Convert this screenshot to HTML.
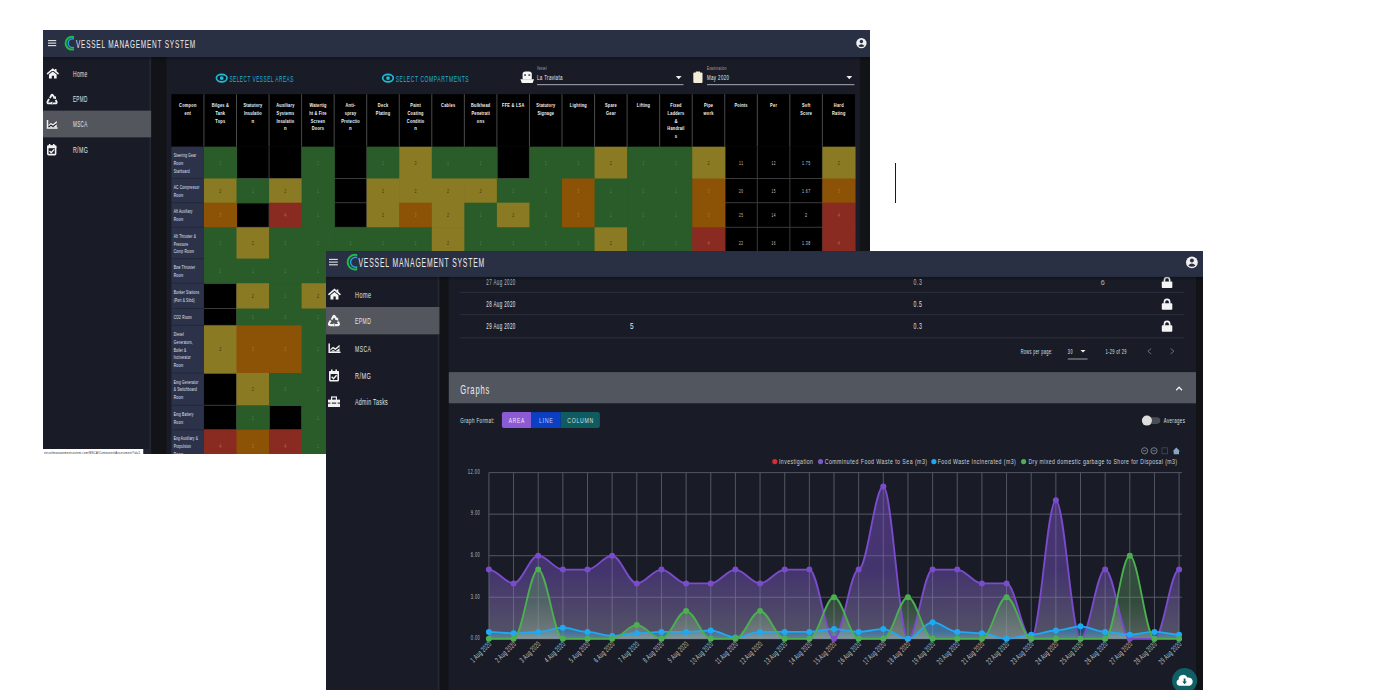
<!DOCTYPE html>
<html><head><meta charset="utf-8"><title>Vessel Management System</title>
<style>html,body{margin:0;padding:0;background:#fff;} svg{display:block;} text{font-family:"Liberation Sans",sans-serif;}</style>
</head><body>
<svg width="1380" height="690" viewBox="0 0 1380 690">
<defs><linearGradient id="hsh" x1="0" y1="0" x2="0" y2="1"><stop offset="0" stop-color="#000" stop-opacity="0.3"/><stop offset="1" stop-color="#000" stop-opacity="0"/></linearGradient></defs>
<rect x="0" y="0" width="1380" height="690" fill="#ffffff"/>
<clipPath id="c1"><rect x="43" y="30" width="827" height="424"/></clipPath>
<g clip-path="url(#c1)">
<rect x="43.00" y="30.00" width="827.00" height="424.00" fill="#191c26" />
<rect x="43.00" y="30.00" width="827.00" height="27.00" fill="#2a3043" />
<rect x="48.00" y="40.05" width="8.20" height="1.10" fill="#e6e6e6" />
<rect x="48.00" y="42.55" width="8.20" height="1.10" fill="#e6e6e6" />
<rect x="48.00" y="45.05" width="8.20" height="1.10" fill="#e6e6e6" />
<clipPath id="lg1"><rect x="62.599999999999994" y="33.800000000000004" width="11.400000000000006" height="18.8"/></clipPath>
<g clip-path="url(#lg1)">
<circle cx="72.0" cy="43.2" r="6.4" stroke="#1cbc48" stroke-width="2.0" fill="none"/>
<circle cx="72.6" cy="43.2" r="4.44" stroke="#1ea6e0" stroke-width="1.4" fill="none"/>
</g>
<text transform="translate(76.00,48.00) scale(0.5878,1)" font-size="11" fill="#ececec" textLength="202.80" lengthAdjust="spacing" >VESSEL MANAGEMENT SYSTEM</text>
<circle cx="861.4" cy="43.1" r="5.2" fill="#f0f0f0"/>
<circle cx="861.4" cy="41.54" r="1.7160000000000002" fill="#2a3043"/>
<path d="M858.1759999999999,45.96 Q861.4,42.32 864.624,45.96 Q861.4,48.04 858.1759999999999,45.96Z" fill="#2a3043"/>
<rect x="43.00" y="57.00" width="108.30" height="397.00" fill="#191c26" />
<rect x="43.00" y="110.80" width="108.30" height="26.40" fill="#53565d" />
<rect x="149.30" y="57.00" width="2.00" height="397.00" fill="#232733" />
<rect x="43.00" y="110.80" width="108.30" height="26.40" fill="#53565d" />
<rect x="151.30" y="57.00" width="15.10" height="397.00" fill="#121316" />
<rect x="860.20" y="57.00" width="9.80" height="397.00" fill="#121316" />
<rect x="43" y="57" width="827" height="4" fill="url(#hsh)"/>
<path d="M47.52,73.61 L52.80,69.24 L58.08,73.61" stroke="#f2f2f2" stroke-width="1.56" stroke-linecap="round" fill="none"/>
<rect x="54.96" y="69.03" width="1.56" height="3.12" fill="#f2f2f2" />
<path d="M52.80,71.53 L56.64,74.44 L56.64,78.60 L54.00,78.60 L54.00,75.69 L51.84,75.69 L51.84,78.60 L48.96,78.60 L48.96,74.44 Z" fill="#f2f2f2"/>
<path d="M49.90,98.17 L51.55,95.05 Q52.10,94.22 52.76,95.05 L54.52,97.96" stroke="#f2f2f2" stroke-width="1.87" fill="none"/>
<path d="M52.98,98.17 L56.06,99.21 L55.84,96.09Z" fill="#f2f2f2"/>
<path d="M49.02,99.00 L47.48,101.91 Q47.15,103.37 48.80,103.37 L51.00,103.37" stroke="#f2f2f2" stroke-width="1.87" fill="none"/>
<path d="M52.65,103.37 L55.40,103.37 Q57.05,103.37 56.50,101.60 L55.62,100.04" stroke="#f2f2f2" stroke-width="1.87" fill="none"/>
<path d="M52.32,101.29 L52.32,105.03 L49.90,103.16Z" fill="#f2f2f2"/>
<path d="M47.50,120.00 L47.50,128.00 L57.60,128.00" stroke="#f2f2f2" stroke-width="1.5" fill="none"/>
<path d="M48.53,127.30 L48.53,125.05 L50.90,123.05 L53.06,124.35 L56.74,121.04 L56.74,127.30 Z" fill="#f2f2f2"/>
<path d="M48.53,126.96 L50.90,125.22 L53.06,126.53 L56.74,123.65" stroke="#191c26" stroke-width="1.1" fill="none"/>
<rect x="47.80" y="146.16" width="7.80" height="8.42" stroke="#f2f2f2" stroke-width="1.6" fill="none" rx="0.8"/>
<rect x="47.00" y="145.62" width="9.40" height="2.59" fill="#f2f2f2" />
<rect x="48.88" y="144.00" width="1.50" height="3.02" fill="#f2f2f2" />
<rect x="53.02" y="144.00" width="1.50" height="3.02" fill="#f2f2f2" />
<path d="M49.54,150.91 L51.23,152.64 L54.14,149.40" stroke="#f2f2f2" stroke-width="1.4" fill="none"/>
<text transform="translate(72.90,76.70) scale(0.5953,1)" font-size="8.4" fill="#e2e4e8" textLength="24.36" lengthAdjust="spacing" >Home</text>
<text transform="translate(72.90,102.30) scale(0.5496,1)" font-size="8.4" fill="#e2e4e8" textLength="26.38" lengthAdjust="spacing" >EPMD</text>
<text transform="translate(72.90,127.30) scale(0.5496,1)" font-size="8.4" fill="#e2e4e8" textLength="26.38" lengthAdjust="spacing" >MSCA</text>
<text transform="translate(72.90,153.00) scale(0.6292,1)" font-size="8.4" fill="#e2e4e8" textLength="23.84" lengthAdjust="spacing" >R/MG</text>
<ellipse cx="221.7" cy="78.1" rx="5.3" ry="3.7" stroke="#1cbcd6" stroke-width="1.7" fill="none"/>
<circle cx="221.7" cy="78.1" r="1.9" fill="#1cbcd6"/>
<text transform="translate(229.40,81.70) scale(0.5264,1)" font-size="9" fill="#21b3d6" textLength="121.58" lengthAdjust="spacing" >SELECT VESSEL AREAS</text>
<ellipse cx="388.0" cy="78.1" rx="5.3" ry="3.7" stroke="#1cbcd6" stroke-width="1.7" fill="none"/>
<circle cx="388.0" cy="78.1" r="1.9" fill="#1cbcd6"/>
<text transform="translate(395.70,81.70) scale(0.5555,1)" font-size="9" fill="#21b3d6" textLength="131.42" lengthAdjust="spacing" >SELECT COMPARTMENTS</text>
<path d="M520.4,79.2 L534,79.2 L532.6,82.9 L521.8,82.9Z" fill="#f6f6f6"/>
<path d="M522.6,79.6 L522.6,74.2 Q522.6,71.4 525.4,71.4 L529,71.4 Q531.8,71.4 531.8,74.2 L531.8,79.6Z" fill="#f6f6f6"/>
<rect x="524.20" y="74.40" width="1.80" height="1.30" fill="#191c26" />
<rect x="528.40" y="74.40" width="1.80" height="1.30" fill="#191c26" />
<text transform="translate(537.00,70.00) scale(0.6162,1)" font-size="4.5" fill="#aab0bc" textLength="15.42" lengthAdjust="spacing" >Vessel</text>
<text transform="translate(537.00,80.00) scale(0.5683,1)" font-size="7.8" fill="#eef0f4" textLength="44.87" lengthAdjust="spacing" >La Traviata</text>
<rect x="537.00" y="84.00" width="146.50" height="1.20" fill="#8c9099" />
<path d="M675.8,76 L681.6,76 L678.7,79.2Z" fill="#eeeeee"/>
<rect x="693.30" y="72.50" width="9.20" height="10.50" fill="#f3ecd8" rx="1"/>
<rect x="695.80" y="71.50" width="4.20" height="2.20" fill="#f3ecd8" />
<text transform="translate(707.00,70.00) scale(0.6772,1)" font-size="4.5" fill="#aab0bc" textLength="28.80" lengthAdjust="spacing" >Examination</text>
<text transform="translate(707.00,80.30) scale(0.5385,1)" font-size="8" fill="#eef0f4" textLength="40.85" lengthAdjust="spacing" >May 2020</text>
<rect x="707.00" y="84.00" width="147.40" height="1.20" fill="#8c9099" />
<path d="M846.4,76 L852.2,76 L849.3,79.2Z" fill="#eeeeee"/>
<rect x="171.40" y="94.20" width="683.55" height="52.50" fill="#000000" />
<rect x="203.45" y="94.20" width="1.00" height="52.50" fill="#4a4a4a" />
<rect x="236.00" y="94.20" width="1.00" height="52.50" fill="#4a4a4a" />
<rect x="268.55" y="94.20" width="1.00" height="52.50" fill="#4a4a4a" />
<rect x="301.10" y="94.20" width="1.00" height="52.50" fill="#4a4a4a" />
<rect x="333.65" y="94.20" width="1.00" height="52.50" fill="#4a4a4a" />
<rect x="366.20" y="94.20" width="1.00" height="52.50" fill="#4a4a4a" />
<rect x="398.75" y="94.20" width="1.00" height="52.50" fill="#4a4a4a" />
<rect x="431.30" y="94.20" width="1.00" height="52.50" fill="#4a4a4a" />
<rect x="463.85" y="94.20" width="1.00" height="52.50" fill="#4a4a4a" />
<rect x="496.40" y="94.20" width="1.00" height="52.50" fill="#4a4a4a" />
<rect x="528.95" y="94.20" width="1.00" height="52.50" fill="#4a4a4a" />
<rect x="561.50" y="94.20" width="1.00" height="52.50" fill="#4a4a4a" />
<rect x="594.05" y="94.20" width="1.00" height="52.50" fill="#4a4a4a" />
<rect x="626.60" y="94.20" width="1.00" height="52.50" fill="#4a4a4a" />
<rect x="659.15" y="94.20" width="1.00" height="52.50" fill="#4a4a4a" />
<rect x="691.70" y="94.20" width="1.00" height="52.50" fill="#4a4a4a" />
<rect x="724.25" y="94.20" width="1.00" height="52.50" fill="#4a4a4a" />
<rect x="756.80" y="94.20" width="1.00" height="52.50" fill="#4a4a4a" />
<rect x="789.35" y="94.20" width="1.00" height="52.50" fill="#4a4a4a" />
<rect x="821.90" y="94.20" width="1.00" height="52.50" fill="#4a4a4a" />
<text transform="translate(187.68,107.40) scale(0.6348,1)" font-size="6.2" fill="#f6f6f6" text-anchor="middle" font-weight="bold" textLength="27.33" lengthAdjust="spacing" >Compon</text>
<text transform="translate(187.68,115.05) scale(0.6348,1)" font-size="6.2" fill="#f6f6f6" text-anchor="middle" font-weight="bold" textLength="10.11" lengthAdjust="spacing" >ent</text>
<text transform="translate(220.22,107.40) scale(0.6348,1)" font-size="6.2" fill="#f6f6f6" text-anchor="middle" font-weight="bold" textLength="26.96" lengthAdjust="spacing" >Bilges &amp;</text>
<text transform="translate(220.22,115.05) scale(0.6348,1)" font-size="6.2" fill="#f6f6f6" text-anchor="middle" font-weight="bold" textLength="15.23" lengthAdjust="spacing" >Tank</text>
<text transform="translate(220.22,122.70) scale(0.6348,1)" font-size="6.2" fill="#f6f6f6" text-anchor="middle" font-weight="bold" textLength="15.60" lengthAdjust="spacing" >Tops</text>
<text transform="translate(252.78,107.40) scale(0.6348,1)" font-size="6.2" fill="#f6f6f6" text-anchor="middle" font-weight="bold" textLength="29.58" lengthAdjust="spacing" >Statutory</text>
<text transform="translate(252.78,115.05) scale(0.6348,1)" font-size="6.2" fill="#f6f6f6" text-anchor="middle" font-weight="bold" textLength="27.71" lengthAdjust="spacing" >Insulatio</text>
<text x="252.78" y="122.70" font-size="6.2" fill="#f6f6f6" text-anchor="middle" font-weight="bold" textLength="2.61" lengthAdjust="spacingAndGlyphs" >n</text>
<text transform="translate(285.32,107.40) scale(0.6348,1)" font-size="6.2" fill="#f6f6f6" text-anchor="middle" font-weight="bold" textLength="28.47" lengthAdjust="spacing" >Auxiliary</text>
<text transform="translate(285.32,115.05) scale(0.6348,1)" font-size="6.2" fill="#f6f6f6" text-anchor="middle" font-weight="bold" textLength="27.72" lengthAdjust="spacing" >Systems</text>
<text transform="translate(285.32,122.70) scale(0.6348,1)" font-size="6.2" fill="#f6f6f6" text-anchor="middle" font-weight="bold" textLength="27.71" lengthAdjust="spacing" >Insulatio</text>
<text x="285.32" y="130.35" font-size="6.2" fill="#f6f6f6" text-anchor="middle" font-weight="bold" textLength="2.61" lengthAdjust="spacingAndGlyphs" >n</text>
<text transform="translate(317.88,107.40) scale(0.6348,1)" font-size="6.2" fill="#f6f6f6" text-anchor="middle" font-weight="bold" textLength="26.71" lengthAdjust="spacing" >Watertig</text>
<text transform="translate(317.88,115.05) scale(0.6348,1)" font-size="6.2" fill="#f6f6f6" text-anchor="middle" font-weight="bold" textLength="27.33" lengthAdjust="spacing" >ht &amp; Fire</text>
<text transform="translate(317.88,122.70) scale(0.6348,1)" font-size="6.2" fill="#f6f6f6" text-anchor="middle" font-weight="bold" textLength="22.48" lengthAdjust="spacing" >Screen</text>
<text transform="translate(317.88,130.35) scale(0.6348,1)" font-size="6.2" fill="#f6f6f6" text-anchor="middle" font-weight="bold" textLength="19.47" lengthAdjust="spacing" >Doors</text>
<text transform="translate(350.42,107.40) scale(0.6348,1)" font-size="6.2" fill="#f6f6f6" text-anchor="middle" font-weight="bold" textLength="15.34" lengthAdjust="spacing" >Anti-</text>
<text transform="translate(350.42,115.05) scale(0.6348,1)" font-size="6.2" fill="#f6f6f6" text-anchor="middle" font-weight="bold" textLength="17.98" lengthAdjust="spacing" >spray</text>
<text transform="translate(350.42,122.70) scale(0.6348,1)" font-size="6.2" fill="#f6f6f6" text-anchor="middle" font-weight="bold" textLength="29.21" lengthAdjust="spacing" >Protectio</text>
<text x="350.42" y="130.35" font-size="6.2" fill="#f6f6f6" text-anchor="middle" font-weight="bold" textLength="2.61" lengthAdjust="spacingAndGlyphs" >n</text>
<text transform="translate(382.97,107.40) scale(0.6348,1)" font-size="6.2" fill="#f6f6f6" text-anchor="middle" font-weight="bold" textLength="16.11" lengthAdjust="spacing" >Deck</text>
<text transform="translate(382.97,115.05) scale(0.6348,1)" font-size="6.2" fill="#f6f6f6" text-anchor="middle" font-weight="bold" textLength="22.47" lengthAdjust="spacing" >Plating</text>
<text transform="translate(415.52,107.40) scale(0.6348,1)" font-size="6.2" fill="#f6f6f6" text-anchor="middle" font-weight="bold" textLength="16.48" lengthAdjust="spacing" >Paint</text>
<text transform="translate(415.52,115.05) scale(0.6348,1)" font-size="6.2" fill="#f6f6f6" text-anchor="middle" font-weight="bold" textLength="25.08" lengthAdjust="spacing" >Coating</text>
<text transform="translate(415.52,122.70) scale(0.6348,1)" font-size="6.2" fill="#f6f6f6" text-anchor="middle" font-weight="bold" textLength="27.32" lengthAdjust="spacing" >Conditio</text>
<text x="415.52" y="130.35" font-size="6.2" fill="#f6f6f6" text-anchor="middle" font-weight="bold" textLength="2.61" lengthAdjust="spacingAndGlyphs" >n</text>
<text transform="translate(448.07,107.40) scale(0.6348,1)" font-size="6.2" fill="#f6f6f6" text-anchor="middle" font-weight="bold" textLength="22.10" lengthAdjust="spacing" >Cables</text>
<text transform="translate(480.62,107.40) scale(0.6348,1)" font-size="6.2" fill="#f6f6f6" text-anchor="middle" font-weight="bold" textLength="30.33" lengthAdjust="spacing" >Bulkhead</text>
<text transform="translate(480.62,115.05) scale(0.6348,1)" font-size="6.2" fill="#f6f6f6" text-anchor="middle" font-weight="bold" textLength="28.84" lengthAdjust="spacing" >Penetrati</text>
<text transform="translate(480.62,122.70) scale(0.6348,1)" font-size="6.2" fill="#f6f6f6" text-anchor="middle" font-weight="bold" textLength="11.98" lengthAdjust="spacing" >ons</text>
<text transform="translate(513.17,107.40) scale(0.6348,1)" font-size="6.2" fill="#f6f6f6" text-anchor="middle" font-weight="bold" textLength="34.82" lengthAdjust="spacing" >FFE &amp; LSA</text>
<text transform="translate(545.72,107.40) scale(0.6348,1)" font-size="6.2" fill="#f6f6f6" text-anchor="middle" font-weight="bold" textLength="29.58" lengthAdjust="spacing" >Statutory</text>
<text transform="translate(545.72,115.05) scale(0.6348,1)" font-size="6.2" fill="#f6f6f6" text-anchor="middle" font-weight="bold" textLength="26.21" lengthAdjust="spacing" >Signage</text>
<text transform="translate(578.27,107.40) scale(0.6348,1)" font-size="6.2" fill="#f6f6f6" text-anchor="middle" font-weight="bold" textLength="26.57" lengthAdjust="spacing" >Lighting</text>
<text transform="translate(610.82,107.40) scale(0.6348,1)" font-size="6.2" fill="#f6f6f6" text-anchor="middle" font-weight="bold" textLength="18.73" lengthAdjust="spacing" >Spare</text>
<text transform="translate(610.82,115.05) scale(0.6348,1)" font-size="6.2" fill="#f6f6f6" text-anchor="middle" font-weight="bold" textLength="15.36" lengthAdjust="spacing" >Gear</text>
<text transform="translate(643.37,107.40) scale(0.6348,1)" font-size="6.2" fill="#f6f6f6" text-anchor="middle" font-weight="bold" textLength="20.58" lengthAdjust="spacing" >Lifting</text>
<text transform="translate(675.92,107.40) scale(0.6348,1)" font-size="6.2" fill="#f6f6f6" text-anchor="middle" font-weight="bold" textLength="17.60" lengthAdjust="spacing" >Fixed</text>
<text transform="translate(675.92,115.05) scale(0.6348,1)" font-size="6.2" fill="#f6f6f6" text-anchor="middle" font-weight="bold" textLength="26.22" lengthAdjust="spacing" >Ladders</text>
<text x="675.92" y="122.70" font-size="6.2" fill="#f6f6f6" text-anchor="middle" font-weight="bold" textLength="3.09" lengthAdjust="spacingAndGlyphs" >&amp;</text>
<text transform="translate(675.92,130.35) scale(0.6348,1)" font-size="6.2" fill="#f6f6f6" text-anchor="middle" font-weight="bold" textLength="26.96" lengthAdjust="spacing" >Handrail</text>
<text x="675.92" y="138.00" font-size="6.2" fill="#f6f6f6" text-anchor="middle" font-weight="bold" textLength="2.38" lengthAdjust="spacingAndGlyphs" >s</text>
<text transform="translate(708.47,107.40) scale(0.6348,1)" font-size="6.2" fill="#f6f6f6" text-anchor="middle" font-weight="bold" textLength="14.23" lengthAdjust="spacing" >Pipe</text>
<text transform="translate(708.47,115.05) scale(0.6348,1)" font-size="6.2" fill="#f6f6f6" text-anchor="middle" font-weight="bold" textLength="15.73" lengthAdjust="spacing" >work</text>
<text transform="translate(741.02,107.40) scale(0.6348,1)" font-size="6.2" fill="#f6f6f6" text-anchor="middle" font-weight="bold" textLength="20.59" lengthAdjust="spacing" >Points</text>
<text transform="translate(773.57,107.40) scale(0.6348,1)" font-size="6.2" fill="#f6f6f6" text-anchor="middle" font-weight="bold" textLength="10.87" lengthAdjust="spacing" >Per</text>
<text transform="translate(806.12,107.40) scale(0.6348,1)" font-size="6.2" fill="#f6f6f6" text-anchor="middle" font-weight="bold" textLength="13.10" lengthAdjust="spacing" >Soft</text>
<text transform="translate(806.12,115.05) scale(0.6348,1)" font-size="6.2" fill="#f6f6f6" text-anchor="middle" font-weight="bold" textLength="18.73" lengthAdjust="spacing" >Score</text>
<text transform="translate(838.67,107.40) scale(0.6348,1)" font-size="6.2" fill="#f6f6f6" text-anchor="middle" font-weight="bold" textLength="15.35" lengthAdjust="spacing" >Hard</text>
<text transform="translate(838.67,115.05) scale(0.6348,1)" font-size="6.2" fill="#f6f6f6" text-anchor="middle" font-weight="bold" textLength="20.97" lengthAdjust="spacing" >Rating</text>
<rect x="203.95" y="146.70" width="651.00" height="315.30" fill="#000000" />
<rect x="236.00" y="146.70" width="1.00" height="315.30" fill="#3a3a3a" />
<rect x="268.55" y="146.70" width="1.00" height="315.30" fill="#3a3a3a" />
<rect x="301.10" y="146.70" width="1.00" height="315.30" fill="#3a3a3a" />
<rect x="333.65" y="146.70" width="1.00" height="315.30" fill="#3a3a3a" />
<rect x="366.20" y="146.70" width="1.00" height="315.30" fill="#3a3a3a" />
<rect x="398.75" y="146.70" width="1.00" height="315.30" fill="#3a3a3a" />
<rect x="431.30" y="146.70" width="1.00" height="315.30" fill="#3a3a3a" />
<rect x="463.85" y="146.70" width="1.00" height="315.30" fill="#3a3a3a" />
<rect x="496.40" y="146.70" width="1.00" height="315.30" fill="#3a3a3a" />
<rect x="528.95" y="146.70" width="1.00" height="315.30" fill="#3a3a3a" />
<rect x="561.50" y="146.70" width="1.00" height="315.30" fill="#3a3a3a" />
<rect x="594.05" y="146.70" width="1.00" height="315.30" fill="#3a3a3a" />
<rect x="626.60" y="146.70" width="1.00" height="315.30" fill="#3a3a3a" />
<rect x="659.15" y="146.70" width="1.00" height="315.30" fill="#3a3a3a" />
<rect x="691.70" y="146.70" width="1.00" height="315.30" fill="#3a3a3a" />
<rect x="724.25" y="146.70" width="1.00" height="315.30" fill="#3a3a3a" />
<rect x="756.80" y="146.70" width="1.00" height="315.30" fill="#3a3a3a" />
<rect x="789.35" y="146.70" width="1.00" height="315.30" fill="#3a3a3a" />
<rect x="821.90" y="146.70" width="1.00" height="315.30" fill="#3a3a3a" />
<rect x="203.95" y="178.00" width="651.00" height="1.00" fill="#3a3a3a" />
<rect x="203.95" y="202.20" width="651.00" height="1.00" fill="#3a3a3a" />
<rect x="203.95" y="226.80" width="651.00" height="1.00" fill="#3a3a3a" />
<rect x="203.95" y="258.10" width="651.00" height="1.00" fill="#3a3a3a" />
<rect x="203.95" y="282.70" width="651.00" height="1.00" fill="#3a3a3a" />
<rect x="203.95" y="308.00" width="651.00" height="1.00" fill="#3a3a3a" />
<rect x="203.95" y="324.90" width="651.00" height="1.00" fill="#3a3a3a" />
<rect x="203.95" y="372.50" width="651.00" height="1.00" fill="#3a3a3a" />
<rect x="203.95" y="404.80" width="651.00" height="1.00" fill="#3a3a3a" />
<rect x="203.95" y="429.20" width="651.00" height="1.00" fill="#3a3a3a" />
<rect x="171.40" y="146.70" width="32.55" height="315.30" fill="#2b3249" />
<rect x="171.40" y="178.00" width="32.55" height="1.00" fill="#232838" />
<rect x="171.40" y="202.20" width="32.55" height="1.00" fill="#232838" />
<rect x="171.40" y="226.80" width="32.55" height="1.00" fill="#232838" />
<rect x="171.40" y="258.10" width="32.55" height="1.00" fill="#232838" />
<rect x="171.40" y="282.70" width="32.55" height="1.00" fill="#232838" />
<rect x="171.40" y="308.00" width="32.55" height="1.00" fill="#232838" />
<rect x="171.40" y="324.90" width="32.55" height="1.00" fill="#232838" />
<rect x="171.40" y="372.50" width="32.55" height="1.00" fill="#232838" />
<rect x="171.40" y="404.80" width="32.55" height="1.00" fill="#232838" />
<rect x="171.40" y="429.20" width="32.55" height="1.00" fill="#232838" />
<rect x="203.95" y="146.70" width="33.15" height="32.40" fill="#2a5c2a" />
<rect x="301.60" y="146.70" width="33.15" height="32.40" fill="#2a5c2a" />
<rect x="366.70" y="146.70" width="33.15" height="32.40" fill="#2a5c2a" />
<rect x="399.25" y="146.70" width="33.15" height="32.40" fill="#8a7a24" />
<rect x="431.80" y="146.70" width="33.15" height="32.40" fill="#2a5c2a" />
<rect x="464.35" y="146.70" width="33.15" height="32.40" fill="#2a5c2a" />
<rect x="529.45" y="146.70" width="33.15" height="32.40" fill="#2a5c2a" />
<rect x="562.00" y="146.70" width="33.15" height="32.40" fill="#2a5c2a" />
<rect x="594.55" y="146.70" width="33.15" height="32.40" fill="#8a7a24" />
<rect x="627.10" y="146.70" width="33.15" height="32.40" fill="#2a5c2a" />
<rect x="659.65" y="146.70" width="33.15" height="32.40" fill="#2a5c2a" />
<rect x="692.20" y="146.70" width="33.15" height="32.40" fill="#8a7a24" />
<rect x="822.40" y="146.70" width="33.15" height="32.40" fill="#8a7a24" />
<text transform="translate(173.70,157.40) scale(0.5580,1)" font-size="5.8" fill="#e6ecf8" textLength="40.12" lengthAdjust="spacing" >Steering Gear</text>
<text transform="translate(173.70,165.10) scale(0.5580,1)" font-size="5.8" fill="#e6ecf8" textLength="17.19" lengthAdjust="spacing" >Room</text>
<text transform="translate(173.70,172.80) scale(0.5580,1)" font-size="5.8" fill="#e6ecf8" textLength="28.30" lengthAdjust="spacing" >Starboard</text>
<text x="220.22" y="164.60" font-size="5.2" fill="#4f7f4f" text-anchor="middle" textLength="2.00" lengthAdjust="spacingAndGlyphs" >1</text>
<text x="317.88" y="164.60" font-size="5.2" fill="#4f7f4f" text-anchor="middle" textLength="2.00" lengthAdjust="spacingAndGlyphs" >1</text>
<text x="382.97" y="164.60" font-size="5.2" fill="#4f7f4f" text-anchor="middle" textLength="2.00" lengthAdjust="spacingAndGlyphs" >1</text>
<text x="415.52" y="164.60" font-size="5.2" fill="#3a3418" text-anchor="middle" textLength="2.00" lengthAdjust="spacingAndGlyphs" >3</text>
<text x="448.07" y="164.60" font-size="5.2" fill="#4f7f4f" text-anchor="middle" textLength="2.00" lengthAdjust="spacingAndGlyphs" >1</text>
<text x="480.62" y="164.60" font-size="5.2" fill="#4f7f4f" text-anchor="middle" textLength="2.00" lengthAdjust="spacingAndGlyphs" >1</text>
<text x="545.72" y="164.60" font-size="5.2" fill="#4f7f4f" text-anchor="middle" textLength="2.00" lengthAdjust="spacingAndGlyphs" >1</text>
<text x="578.27" y="164.60" font-size="5.2" fill="#4f7f4f" text-anchor="middle" textLength="2.00" lengthAdjust="spacingAndGlyphs" >1</text>
<text x="610.82" y="164.60" font-size="5.2" fill="#3a3418" text-anchor="middle" textLength="2.00" lengthAdjust="spacingAndGlyphs" >2</text>
<text x="643.37" y="164.60" font-size="5.2" fill="#4f7f4f" text-anchor="middle" textLength="2.00" lengthAdjust="spacingAndGlyphs" >1</text>
<text x="675.92" y="164.60" font-size="5.2" fill="#4f7f4f" text-anchor="middle" textLength="2.00" lengthAdjust="spacingAndGlyphs" >1</text>
<text x="708.47" y="164.60" font-size="5.2" fill="#3a3418" text-anchor="middle" textLength="2.00" lengthAdjust="spacingAndGlyphs" >2</text>
<text transform="translate(741.02,164.60) scale(0.6372,1)" font-size="5.2" fill="#d0d0d0" text-anchor="middle" textLength="6.28" lengthAdjust="spacing" >11</text>
<text transform="translate(773.57,164.60) scale(0.5947,1)" font-size="5.2" fill="#d0d0d0" text-anchor="middle" textLength="6.73" lengthAdjust="spacing" >12</text>
<text transform="translate(806.12,164.60) scale(0.6798,1)" font-size="5.2" fill="#d0d0d0" text-anchor="middle" textLength="11.77" lengthAdjust="spacing" >1.75</text>
<text x="838.67" y="164.60" font-size="5.2" fill="#3a3418" text-anchor="middle" textLength="2.00" lengthAdjust="spacingAndGlyphs" >2</text>
<rect x="203.95" y="178.50" width="33.15" height="24.80" fill="#8a7a24" />
<rect x="236.50" y="178.50" width="33.15" height="24.80" fill="#2a5c2a" />
<rect x="269.05" y="178.50" width="33.15" height="24.80" fill="#8a7a24" />
<rect x="301.60" y="178.50" width="33.15" height="24.80" fill="#2a5c2a" />
<rect x="366.70" y="178.50" width="33.15" height="24.80" fill="#8a7a24" />
<rect x="399.25" y="178.50" width="33.15" height="24.80" fill="#8a7a24" />
<rect x="431.80" y="178.50" width="33.15" height="24.80" fill="#8a7a24" />
<rect x="464.35" y="178.50" width="33.15" height="24.80" fill="#8a7a24" />
<rect x="496.90" y="178.50" width="33.15" height="24.80" fill="#2a5c2a" />
<rect x="529.45" y="178.50" width="33.15" height="24.80" fill="#2a5c2a" />
<rect x="562.00" y="178.50" width="33.15" height="24.80" fill="#8c5205" />
<rect x="594.55" y="178.50" width="33.15" height="24.80" fill="#2a5c2a" />
<rect x="627.10" y="178.50" width="33.15" height="24.80" fill="#2a5c2a" />
<rect x="659.65" y="178.50" width="33.15" height="24.80" fill="#2a5c2a" />
<rect x="692.20" y="178.50" width="33.15" height="24.80" fill="#8c5205" />
<rect x="822.40" y="178.50" width="33.15" height="24.80" fill="#8c5205" />
<text transform="translate(173.70,189.20) scale(0.5580,1)" font-size="5.8" fill="#e6ecf8" textLength="45.84" lengthAdjust="spacing" >AC Compressor</text>
<text transform="translate(173.70,196.90) scale(0.5580,1)" font-size="5.8" fill="#e6ecf8" textLength="17.19" lengthAdjust="spacing" >Room</text>
<text x="220.22" y="192.60" font-size="5.2" fill="#3a3418" text-anchor="middle" textLength="2.00" lengthAdjust="spacingAndGlyphs" >2</text>
<text x="252.78" y="192.60" font-size="5.2" fill="#4f7f4f" text-anchor="middle" textLength="2.00" lengthAdjust="spacingAndGlyphs" >1</text>
<text x="285.32" y="192.60" font-size="5.2" fill="#3a3418" text-anchor="middle" textLength="2.00" lengthAdjust="spacingAndGlyphs" >2</text>
<text x="317.88" y="192.60" font-size="5.2" fill="#4f7f4f" text-anchor="middle" textLength="2.00" lengthAdjust="spacingAndGlyphs" >1</text>
<text x="382.97" y="192.60" font-size="5.2" fill="#3a3418" text-anchor="middle" textLength="2.00" lengthAdjust="spacingAndGlyphs" >2</text>
<text x="415.52" y="192.60" font-size="5.2" fill="#3a3418" text-anchor="middle" textLength="2.00" lengthAdjust="spacingAndGlyphs" >2</text>
<text x="448.07" y="192.60" font-size="5.2" fill="#3a3418" text-anchor="middle" textLength="2.00" lengthAdjust="spacingAndGlyphs" >2</text>
<text x="480.62" y="192.60" font-size="5.2" fill="#3a3418" text-anchor="middle" textLength="2.00" lengthAdjust="spacingAndGlyphs" >2</text>
<text x="513.17" y="192.60" font-size="5.2" fill="#4f7f4f" text-anchor="middle" textLength="2.00" lengthAdjust="spacingAndGlyphs" >1</text>
<text x="545.72" y="192.60" font-size="5.2" fill="#4f7f4f" text-anchor="middle" textLength="2.00" lengthAdjust="spacingAndGlyphs" >1</text>
<text x="578.27" y="192.60" font-size="5.2" fill="#b8762e" text-anchor="middle" textLength="2.00" lengthAdjust="spacingAndGlyphs" >3</text>
<text x="610.82" y="192.60" font-size="5.2" fill="#4f7f4f" text-anchor="middle" textLength="2.00" lengthAdjust="spacingAndGlyphs" >1</text>
<text x="643.37" y="192.60" font-size="5.2" fill="#4f7f4f" text-anchor="middle" textLength="2.00" lengthAdjust="spacingAndGlyphs" >1</text>
<text x="675.92" y="192.60" font-size="5.2" fill="#4f7f4f" text-anchor="middle" textLength="2.00" lengthAdjust="spacingAndGlyphs" >1</text>
<text x="708.47" y="192.60" font-size="5.2" fill="#b8762e" text-anchor="middle" textLength="2.00" lengthAdjust="spacingAndGlyphs" >3</text>
<text transform="translate(741.02,192.60) scale(0.5947,1)" font-size="5.2" fill="#d0d0d0" text-anchor="middle" textLength="6.73" lengthAdjust="spacing" >20</text>
<text transform="translate(773.57,192.60) scale(0.5947,1)" font-size="5.2" fill="#d0d0d0" text-anchor="middle" textLength="6.73" lengthAdjust="spacing" >15</text>
<text transform="translate(806.12,192.60) scale(0.6798,1)" font-size="5.2" fill="#d0d0d0" text-anchor="middle" textLength="11.77" lengthAdjust="spacing" >1.67</text>
<text x="838.67" y="192.60" font-size="5.2" fill="#b8762e" text-anchor="middle" textLength="2.00" lengthAdjust="spacingAndGlyphs" >3</text>
<rect x="203.95" y="202.70" width="33.15" height="25.20" fill="#8c5205" />
<rect x="269.05" y="202.70" width="33.15" height="25.20" fill="#8a2b22" />
<rect x="301.60" y="202.70" width="33.15" height="25.20" fill="#2a5c2a" />
<rect x="366.70" y="202.70" width="33.15" height="25.20" fill="#8a7a24" />
<rect x="399.25" y="202.70" width="33.15" height="25.20" fill="#8c5205" />
<rect x="431.80" y="202.70" width="33.15" height="25.20" fill="#8a7a24" />
<rect x="464.35" y="202.70" width="33.15" height="25.20" fill="#2a5c2a" />
<rect x="496.90" y="202.70" width="33.15" height="25.20" fill="#8a7a24" />
<rect x="529.45" y="202.70" width="33.15" height="25.20" fill="#2a5c2a" />
<rect x="562.00" y="202.70" width="33.15" height="25.20" fill="#8c5205" />
<rect x="594.55" y="202.70" width="33.15" height="25.20" fill="#2a5c2a" />
<rect x="627.10" y="202.70" width="33.15" height="25.20" fill="#2a5c2a" />
<rect x="659.65" y="202.70" width="33.15" height="25.20" fill="#2a5c2a" />
<rect x="692.20" y="202.70" width="33.15" height="25.20" fill="#8c5205" />
<rect x="822.40" y="202.70" width="33.15" height="25.20" fill="#8a2b22" />
<text transform="translate(173.70,213.40) scale(0.5580,1)" font-size="5.8" fill="#e6ecf8" textLength="33.67" lengthAdjust="spacing" >Aft Auxiliary</text>
<text transform="translate(173.70,221.10) scale(0.5580,1)" font-size="5.8" fill="#e6ecf8" textLength="17.19" lengthAdjust="spacing" >Room</text>
<text x="220.22" y="217.00" font-size="5.2" fill="#b8762e" text-anchor="middle" textLength="2.00" lengthAdjust="spacingAndGlyphs" >3</text>
<text x="285.32" y="217.00" font-size="5.2" fill="#c8645a" text-anchor="middle" textLength="2.00" lengthAdjust="spacingAndGlyphs" >4</text>
<text x="317.88" y="217.00" font-size="5.2" fill="#4f7f4f" text-anchor="middle" textLength="2.00" lengthAdjust="spacingAndGlyphs" >1</text>
<text x="382.97" y="217.00" font-size="5.2" fill="#3a3418" text-anchor="middle" textLength="2.00" lengthAdjust="spacingAndGlyphs" >2</text>
<text x="415.52" y="217.00" font-size="5.2" fill="#b8762e" text-anchor="middle" textLength="2.00" lengthAdjust="spacingAndGlyphs" >3</text>
<text x="448.07" y="217.00" font-size="5.2" fill="#3a3418" text-anchor="middle" textLength="2.00" lengthAdjust="spacingAndGlyphs" >2</text>
<text x="480.62" y="217.00" font-size="5.2" fill="#4f7f4f" text-anchor="middle" textLength="2.00" lengthAdjust="spacingAndGlyphs" >1</text>
<text x="513.17" y="217.00" font-size="5.2" fill="#3a3418" text-anchor="middle" textLength="2.00" lengthAdjust="spacingAndGlyphs" >2</text>
<text x="545.72" y="217.00" font-size="5.2" fill="#4f7f4f" text-anchor="middle" textLength="2.00" lengthAdjust="spacingAndGlyphs" >1</text>
<text x="578.27" y="217.00" font-size="5.2" fill="#b8762e" text-anchor="middle" textLength="2.00" lengthAdjust="spacingAndGlyphs" >3</text>
<text x="610.82" y="217.00" font-size="5.2" fill="#4f7f4f" text-anchor="middle" textLength="2.00" lengthAdjust="spacingAndGlyphs" >1</text>
<text x="643.37" y="217.00" font-size="5.2" fill="#4f7f4f" text-anchor="middle" textLength="2.00" lengthAdjust="spacingAndGlyphs" >1</text>
<text x="675.92" y="217.00" font-size="5.2" fill="#4f7f4f" text-anchor="middle" textLength="2.00" lengthAdjust="spacingAndGlyphs" >1</text>
<text x="708.47" y="217.00" font-size="5.2" fill="#b8762e" text-anchor="middle" textLength="2.00" lengthAdjust="spacingAndGlyphs" >3</text>
<text transform="translate(741.02,217.00) scale(0.5947,1)" font-size="5.2" fill="#d0d0d0" text-anchor="middle" textLength="6.73" lengthAdjust="spacing" >25</text>
<text transform="translate(773.57,217.00) scale(0.5947,1)" font-size="5.2" fill="#d0d0d0" text-anchor="middle" textLength="6.73" lengthAdjust="spacing" >14</text>
<text x="806.12" y="217.00" font-size="5.2" fill="#d0d0d0" text-anchor="middle" textLength="2.00" lengthAdjust="spacingAndGlyphs" >2</text>
<text x="838.67" y="217.00" font-size="5.2" fill="#c8645a" text-anchor="middle" textLength="2.00" lengthAdjust="spacingAndGlyphs" >4</text>
<rect x="203.95" y="227.30" width="33.15" height="31.90" fill="#2a5c2a" />
<rect x="236.50" y="227.30" width="33.15" height="31.90" fill="#8a7a24" />
<rect x="269.05" y="227.30" width="33.15" height="31.90" fill="#2a5c2a" />
<rect x="301.60" y="227.30" width="33.15" height="31.90" fill="#2a5c2a" />
<rect x="334.15" y="227.30" width="33.15" height="31.90" fill="#2a5c2a" />
<rect x="366.70" y="227.30" width="33.15" height="31.90" fill="#2a5c2a" />
<rect x="399.25" y="227.30" width="33.15" height="31.90" fill="#2a5c2a" />
<rect x="431.80" y="227.30" width="33.15" height="31.90" fill="#8a7a24" />
<rect x="464.35" y="227.30" width="33.15" height="31.90" fill="#2a5c2a" />
<rect x="496.90" y="227.30" width="33.15" height="31.90" fill="#2a5c2a" />
<rect x="529.45" y="227.30" width="33.15" height="31.90" fill="#2a5c2a" />
<rect x="562.00" y="227.30" width="33.15" height="31.90" fill="#2a5c2a" />
<rect x="594.55" y="227.30" width="33.15" height="31.90" fill="#8a7a24" />
<rect x="627.10" y="227.30" width="33.15" height="31.90" fill="#2a5c2a" />
<rect x="659.65" y="227.30" width="33.15" height="31.90" fill="#2a5c2a" />
<rect x="692.20" y="227.30" width="33.15" height="31.90" fill="#8a2b22" />
<rect x="822.40" y="227.30" width="33.15" height="31.90" fill="#8a2b22" />
<text transform="translate(173.70,238.00) scale(0.5580,1)" font-size="5.8" fill="#e6ecf8" textLength="39.64" lengthAdjust="spacing" >Aft Thruster &amp;</text>
<text transform="translate(173.70,245.70) scale(0.5580,1)" font-size="5.8" fill="#e6ecf8" textLength="25.79" lengthAdjust="spacing" >Pressure</text>
<text transform="translate(173.70,253.40) scale(0.5580,1)" font-size="5.8" fill="#e6ecf8" textLength="36.17" lengthAdjust="spacing" >Comp Room</text>
<text x="220.22" y="244.95" font-size="5.2" fill="#4f7f4f" text-anchor="middle" textLength="2.00" lengthAdjust="spacingAndGlyphs" >1</text>
<text x="252.78" y="244.95" font-size="5.2" fill="#3a3418" text-anchor="middle" textLength="2.00" lengthAdjust="spacingAndGlyphs" >2</text>
<text x="285.32" y="244.95" font-size="5.2" fill="#4f7f4f" text-anchor="middle" textLength="2.00" lengthAdjust="spacingAndGlyphs" >1</text>
<text x="317.88" y="244.95" font-size="5.2" fill="#4f7f4f" text-anchor="middle" textLength="2.00" lengthAdjust="spacingAndGlyphs" >1</text>
<text x="350.42" y="244.95" font-size="5.2" fill="#4f7f4f" text-anchor="middle" textLength="2.00" lengthAdjust="spacingAndGlyphs" >1</text>
<text x="382.97" y="244.95" font-size="5.2" fill="#4f7f4f" text-anchor="middle" textLength="2.00" lengthAdjust="spacingAndGlyphs" >1</text>
<text x="415.52" y="244.95" font-size="5.2" fill="#4f7f4f" text-anchor="middle" textLength="2.00" lengthAdjust="spacingAndGlyphs" >1</text>
<text x="448.07" y="244.95" font-size="5.2" fill="#3a3418" text-anchor="middle" textLength="2.00" lengthAdjust="spacingAndGlyphs" >2</text>
<text x="480.62" y="244.95" font-size="5.2" fill="#4f7f4f" text-anchor="middle" textLength="2.00" lengthAdjust="spacingAndGlyphs" >1</text>
<text x="513.17" y="244.95" font-size="5.2" fill="#4f7f4f" text-anchor="middle" textLength="2.00" lengthAdjust="spacingAndGlyphs" >1</text>
<text x="545.72" y="244.95" font-size="5.2" fill="#4f7f4f" text-anchor="middle" textLength="2.00" lengthAdjust="spacingAndGlyphs" >1</text>
<text x="578.27" y="244.95" font-size="5.2" fill="#4f7f4f" text-anchor="middle" textLength="2.00" lengthAdjust="spacingAndGlyphs" >1</text>
<text x="610.82" y="244.95" font-size="5.2" fill="#3a3418" text-anchor="middle" textLength="2.00" lengthAdjust="spacingAndGlyphs" >2</text>
<text x="643.37" y="244.95" font-size="5.2" fill="#4f7f4f" text-anchor="middle" textLength="2.00" lengthAdjust="spacingAndGlyphs" >1</text>
<text x="675.92" y="244.95" font-size="5.2" fill="#4f7f4f" text-anchor="middle" textLength="2.00" lengthAdjust="spacingAndGlyphs" >1</text>
<text x="708.47" y="244.95" font-size="5.2" fill="#c8645a" text-anchor="middle" textLength="2.00" lengthAdjust="spacingAndGlyphs" >4</text>
<text transform="translate(741.02,244.95) scale(0.5947,1)" font-size="5.2" fill="#d0d0d0" text-anchor="middle" textLength="6.73" lengthAdjust="spacing" >22</text>
<text transform="translate(773.57,244.95) scale(0.5947,1)" font-size="5.2" fill="#d0d0d0" text-anchor="middle" textLength="6.73" lengthAdjust="spacing" >16</text>
<text transform="translate(806.12,244.95) scale(0.6798,1)" font-size="5.2" fill="#d0d0d0" text-anchor="middle" textLength="11.77" lengthAdjust="spacing" >1.38</text>
<text x="838.67" y="244.95" font-size="5.2" fill="#c8645a" text-anchor="middle" textLength="2.00" lengthAdjust="spacingAndGlyphs" >4</text>
<rect x="203.95" y="258.60" width="33.15" height="25.20" fill="#2a5c2a" />
<rect x="236.50" y="258.60" width="33.15" height="25.20" fill="#2a5c2a" />
<rect x="269.05" y="258.60" width="33.15" height="25.20" fill="#2a5c2a" />
<rect x="301.60" y="258.60" width="33.15" height="25.20" fill="#2a5c2a" />
<rect x="334.15" y="258.60" width="33.15" height="25.20" fill="#2a5c2a" />
<rect x="366.70" y="258.60" width="33.15" height="25.20" fill="#2a5c2a" />
<rect x="399.25" y="258.60" width="33.15" height="25.20" fill="#2a5c2a" />
<rect x="431.80" y="258.60" width="33.15" height="25.20" fill="#2a5c2a" />
<rect x="464.35" y="258.60" width="33.15" height="25.20" fill="#2a5c2a" />
<rect x="496.90" y="258.60" width="33.15" height="25.20" fill="#2a5c2a" />
<rect x="529.45" y="258.60" width="33.15" height="25.20" fill="#2a5c2a" />
<rect x="562.00" y="258.60" width="33.15" height="25.20" fill="#2a5c2a" />
<rect x="594.55" y="258.60" width="33.15" height="25.20" fill="#2a5c2a" />
<rect x="627.10" y="258.60" width="33.15" height="25.20" fill="#2a5c2a" />
<rect x="659.65" y="258.60" width="33.15" height="25.20" fill="#2a5c2a" />
<rect x="692.20" y="258.60" width="33.15" height="25.20" fill="#2a5c2a" />
<rect x="822.40" y="258.60" width="33.15" height="25.20" fill="#2a5c2a" />
<text transform="translate(173.70,269.30) scale(0.5580,1)" font-size="5.8" fill="#e6ecf8" textLength="38.21" lengthAdjust="spacing" >Bow Thruster</text>
<text transform="translate(173.70,277.00) scale(0.5580,1)" font-size="5.8" fill="#e6ecf8" textLength="17.19" lengthAdjust="spacing" >Room</text>
<text x="220.22" y="272.90" font-size="5.2" fill="#4f7f4f" text-anchor="middle" textLength="2.00" lengthAdjust="spacingAndGlyphs" >1</text>
<text x="252.78" y="272.90" font-size="5.2" fill="#4f7f4f" text-anchor="middle" textLength="2.00" lengthAdjust="spacingAndGlyphs" >1</text>
<text x="285.32" y="272.90" font-size="5.2" fill="#4f7f4f" text-anchor="middle" textLength="2.00" lengthAdjust="spacingAndGlyphs" >1</text>
<text x="317.88" y="272.90" font-size="5.2" fill="#4f7f4f" text-anchor="middle" textLength="2.00" lengthAdjust="spacingAndGlyphs" >1</text>
<text x="350.42" y="272.90" font-size="5.2" fill="#4f7f4f" text-anchor="middle" textLength="2.00" lengthAdjust="spacingAndGlyphs" >1</text>
<text x="382.97" y="272.90" font-size="5.2" fill="#4f7f4f" text-anchor="middle" textLength="2.00" lengthAdjust="spacingAndGlyphs" >1</text>
<text x="415.52" y="272.90" font-size="5.2" fill="#4f7f4f" text-anchor="middle" textLength="2.00" lengthAdjust="spacingAndGlyphs" >1</text>
<text x="448.07" y="272.90" font-size="5.2" fill="#4f7f4f" text-anchor="middle" textLength="2.00" lengthAdjust="spacingAndGlyphs" >1</text>
<text x="480.62" y="272.90" font-size="5.2" fill="#4f7f4f" text-anchor="middle" textLength="2.00" lengthAdjust="spacingAndGlyphs" >1</text>
<text x="513.17" y="272.90" font-size="5.2" fill="#4f7f4f" text-anchor="middle" textLength="2.00" lengthAdjust="spacingAndGlyphs" >1</text>
<text x="545.72" y="272.90" font-size="5.2" fill="#4f7f4f" text-anchor="middle" textLength="2.00" lengthAdjust="spacingAndGlyphs" >1</text>
<text x="578.27" y="272.90" font-size="5.2" fill="#4f7f4f" text-anchor="middle" textLength="2.00" lengthAdjust="spacingAndGlyphs" >1</text>
<text x="610.82" y="272.90" font-size="5.2" fill="#4f7f4f" text-anchor="middle" textLength="2.00" lengthAdjust="spacingAndGlyphs" >1</text>
<text x="643.37" y="272.90" font-size="5.2" fill="#4f7f4f" text-anchor="middle" textLength="2.00" lengthAdjust="spacingAndGlyphs" >1</text>
<text x="675.92" y="272.90" font-size="5.2" fill="#4f7f4f" text-anchor="middle" textLength="2.00" lengthAdjust="spacingAndGlyphs" >1</text>
<text x="708.47" y="272.90" font-size="5.2" fill="#4f7f4f" text-anchor="middle" textLength="2.00" lengthAdjust="spacingAndGlyphs" >1</text>
<text x="838.67" y="272.90" font-size="5.2" fill="#4f7f4f" text-anchor="middle" textLength="2.00" lengthAdjust="spacingAndGlyphs" >1</text>
<rect x="236.50" y="283.20" width="33.15" height="25.90" fill="#8a7a24" />
<rect x="269.05" y="283.20" width="33.15" height="25.90" fill="#2a5c2a" />
<rect x="301.60" y="283.20" width="33.15" height="25.90" fill="#8a7a24" />
<rect x="334.15" y="283.20" width="33.15" height="25.90" fill="#2a5c2a" />
<rect x="366.70" y="283.20" width="33.15" height="25.90" fill="#2a5c2a" />
<rect x="399.25" y="283.20" width="33.15" height="25.90" fill="#2a5c2a" />
<rect x="431.80" y="283.20" width="33.15" height="25.90" fill="#2a5c2a" />
<rect x="464.35" y="283.20" width="33.15" height="25.90" fill="#2a5c2a" />
<rect x="496.90" y="283.20" width="33.15" height="25.90" fill="#2a5c2a" />
<rect x="529.45" y="283.20" width="33.15" height="25.90" fill="#2a5c2a" />
<rect x="562.00" y="283.20" width="33.15" height="25.90" fill="#2a5c2a" />
<rect x="594.55" y="283.20" width="33.15" height="25.90" fill="#2a5c2a" />
<rect x="627.10" y="283.20" width="33.15" height="25.90" fill="#2a5c2a" />
<rect x="659.65" y="283.20" width="33.15" height="25.90" fill="#2a5c2a" />
<rect x="692.20" y="283.20" width="33.15" height="25.90" fill="#2a5c2a" />
<rect x="822.40" y="283.20" width="33.15" height="25.90" fill="#2a5c2a" />
<text transform="translate(173.70,293.90) scale(0.5580,1)" font-size="5.8" fill="#e6ecf8" textLength="45.50" lengthAdjust="spacing" >Bunker Stations</text>
<text transform="translate(173.70,301.60) scale(0.5580,1)" font-size="5.8" fill="#e6ecf8" textLength="37.25" lengthAdjust="spacing" >(Port &amp; Stbd)</text>
<text x="252.78" y="297.85" font-size="5.2" fill="#3a3418" text-anchor="middle" textLength="2.00" lengthAdjust="spacingAndGlyphs" >2</text>
<text x="285.32" y="297.85" font-size="5.2" fill="#4f7f4f" text-anchor="middle" textLength="2.00" lengthAdjust="spacingAndGlyphs" >1</text>
<text x="317.88" y="297.85" font-size="5.2" fill="#3a3418" text-anchor="middle" textLength="2.00" lengthAdjust="spacingAndGlyphs" >2</text>
<text x="350.42" y="297.85" font-size="5.2" fill="#4f7f4f" text-anchor="middle" textLength="2.00" lengthAdjust="spacingAndGlyphs" >1</text>
<text x="382.97" y="297.85" font-size="5.2" fill="#4f7f4f" text-anchor="middle" textLength="2.00" lengthAdjust="spacingAndGlyphs" >1</text>
<text x="415.52" y="297.85" font-size="5.2" fill="#4f7f4f" text-anchor="middle" textLength="2.00" lengthAdjust="spacingAndGlyphs" >1</text>
<text x="448.07" y="297.85" font-size="5.2" fill="#4f7f4f" text-anchor="middle" textLength="2.00" lengthAdjust="spacingAndGlyphs" >1</text>
<text x="480.62" y="297.85" font-size="5.2" fill="#4f7f4f" text-anchor="middle" textLength="2.00" lengthAdjust="spacingAndGlyphs" >1</text>
<text x="513.17" y="297.85" font-size="5.2" fill="#4f7f4f" text-anchor="middle" textLength="2.00" lengthAdjust="spacingAndGlyphs" >1</text>
<text x="545.72" y="297.85" font-size="5.2" fill="#4f7f4f" text-anchor="middle" textLength="2.00" lengthAdjust="spacingAndGlyphs" >1</text>
<text x="578.27" y="297.85" font-size="5.2" fill="#4f7f4f" text-anchor="middle" textLength="2.00" lengthAdjust="spacingAndGlyphs" >1</text>
<text x="610.82" y="297.85" font-size="5.2" fill="#4f7f4f" text-anchor="middle" textLength="2.00" lengthAdjust="spacingAndGlyphs" >1</text>
<text x="643.37" y="297.85" font-size="5.2" fill="#4f7f4f" text-anchor="middle" textLength="2.00" lengthAdjust="spacingAndGlyphs" >1</text>
<text x="675.92" y="297.85" font-size="5.2" fill="#4f7f4f" text-anchor="middle" textLength="2.00" lengthAdjust="spacingAndGlyphs" >1</text>
<text x="708.47" y="297.85" font-size="5.2" fill="#4f7f4f" text-anchor="middle" textLength="2.00" lengthAdjust="spacingAndGlyphs" >1</text>
<text x="838.67" y="297.85" font-size="5.2" fill="#4f7f4f" text-anchor="middle" textLength="2.00" lengthAdjust="spacingAndGlyphs" >1</text>
<rect x="236.50" y="308.50" width="33.15" height="17.50" fill="#2a5c2a" />
<rect x="269.05" y="308.50" width="33.15" height="17.50" fill="#2a5c2a" />
<rect x="301.60" y="308.50" width="33.15" height="17.50" fill="#2a5c2a" />
<rect x="334.15" y="308.50" width="33.15" height="17.50" fill="#2a5c2a" />
<rect x="366.70" y="308.50" width="33.15" height="17.50" fill="#2a5c2a" />
<rect x="399.25" y="308.50" width="33.15" height="17.50" fill="#2a5c2a" />
<rect x="431.80" y="308.50" width="33.15" height="17.50" fill="#2a5c2a" />
<rect x="464.35" y="308.50" width="33.15" height="17.50" fill="#2a5c2a" />
<rect x="496.90" y="308.50" width="33.15" height="17.50" fill="#2a5c2a" />
<rect x="529.45" y="308.50" width="33.15" height="17.50" fill="#2a5c2a" />
<rect x="562.00" y="308.50" width="33.15" height="17.50" fill="#2a5c2a" />
<rect x="594.55" y="308.50" width="33.15" height="17.50" fill="#2a5c2a" />
<rect x="627.10" y="308.50" width="33.15" height="17.50" fill="#2a5c2a" />
<rect x="659.65" y="308.50" width="33.15" height="17.50" fill="#2a5c2a" />
<rect x="692.20" y="308.50" width="33.15" height="17.50" fill="#2a5c2a" />
<rect x="822.40" y="308.50" width="33.15" height="17.50" fill="#2a5c2a" />
<text transform="translate(173.70,319.20) scale(0.5580,1)" font-size="5.8" fill="#e6ecf8" textLength="32.23" lengthAdjust="spacing" >CO2 Room</text>
<text x="252.78" y="318.95" font-size="5.2" fill="#4f7f4f" text-anchor="middle" textLength="2.00" lengthAdjust="spacingAndGlyphs" >1</text>
<text x="285.32" y="318.95" font-size="5.2" fill="#4f7f4f" text-anchor="middle" textLength="2.00" lengthAdjust="spacingAndGlyphs" >1</text>
<text x="317.88" y="318.95" font-size="5.2" fill="#4f7f4f" text-anchor="middle" textLength="2.00" lengthAdjust="spacingAndGlyphs" >1</text>
<text x="350.42" y="318.95" font-size="5.2" fill="#4f7f4f" text-anchor="middle" textLength="2.00" lengthAdjust="spacingAndGlyphs" >1</text>
<text x="382.97" y="318.95" font-size="5.2" fill="#4f7f4f" text-anchor="middle" textLength="2.00" lengthAdjust="spacingAndGlyphs" >1</text>
<text x="415.52" y="318.95" font-size="5.2" fill="#4f7f4f" text-anchor="middle" textLength="2.00" lengthAdjust="spacingAndGlyphs" >1</text>
<text x="448.07" y="318.95" font-size="5.2" fill="#4f7f4f" text-anchor="middle" textLength="2.00" lengthAdjust="spacingAndGlyphs" >1</text>
<text x="480.62" y="318.95" font-size="5.2" fill="#4f7f4f" text-anchor="middle" textLength="2.00" lengthAdjust="spacingAndGlyphs" >1</text>
<text x="513.17" y="318.95" font-size="5.2" fill="#4f7f4f" text-anchor="middle" textLength="2.00" lengthAdjust="spacingAndGlyphs" >1</text>
<text x="545.72" y="318.95" font-size="5.2" fill="#4f7f4f" text-anchor="middle" textLength="2.00" lengthAdjust="spacingAndGlyphs" >1</text>
<text x="578.27" y="318.95" font-size="5.2" fill="#4f7f4f" text-anchor="middle" textLength="2.00" lengthAdjust="spacingAndGlyphs" >1</text>
<text x="610.82" y="318.95" font-size="5.2" fill="#4f7f4f" text-anchor="middle" textLength="2.00" lengthAdjust="spacingAndGlyphs" >1</text>
<text x="643.37" y="318.95" font-size="5.2" fill="#4f7f4f" text-anchor="middle" textLength="2.00" lengthAdjust="spacingAndGlyphs" >1</text>
<text x="675.92" y="318.95" font-size="5.2" fill="#4f7f4f" text-anchor="middle" textLength="2.00" lengthAdjust="spacingAndGlyphs" >1</text>
<text x="708.47" y="318.95" font-size="5.2" fill="#4f7f4f" text-anchor="middle" textLength="2.00" lengthAdjust="spacingAndGlyphs" >1</text>
<text x="838.67" y="318.95" font-size="5.2" fill="#4f7f4f" text-anchor="middle" textLength="2.00" lengthAdjust="spacingAndGlyphs" >1</text>
<rect x="203.95" y="325.40" width="33.15" height="48.20" fill="#8a7a24" />
<rect x="236.50" y="325.40" width="33.15" height="48.20" fill="#8c5205" />
<rect x="269.05" y="325.40" width="33.15" height="48.20" fill="#8c5205" />
<rect x="301.60" y="325.40" width="33.15" height="48.20" fill="#2a5c2a" />
<rect x="334.15" y="325.40" width="33.15" height="48.20" fill="#2a5c2a" />
<rect x="366.70" y="325.40" width="33.15" height="48.20" fill="#2a5c2a" />
<rect x="399.25" y="325.40" width="33.15" height="48.20" fill="#2a5c2a" />
<rect x="431.80" y="325.40" width="33.15" height="48.20" fill="#2a5c2a" />
<rect x="464.35" y="325.40" width="33.15" height="48.20" fill="#2a5c2a" />
<rect x="496.90" y="325.40" width="33.15" height="48.20" fill="#2a5c2a" />
<rect x="529.45" y="325.40" width="33.15" height="48.20" fill="#2a5c2a" />
<rect x="562.00" y="325.40" width="33.15" height="48.20" fill="#2a5c2a" />
<rect x="594.55" y="325.40" width="33.15" height="48.20" fill="#2a5c2a" />
<rect x="627.10" y="325.40" width="33.15" height="48.20" fill="#2a5c2a" />
<rect x="659.65" y="325.40" width="33.15" height="48.20" fill="#2a5c2a" />
<rect x="692.20" y="325.40" width="33.15" height="48.20" fill="#2a5c2a" />
<rect x="822.40" y="325.40" width="33.15" height="48.20" fill="#2a5c2a" />
<text transform="translate(173.70,336.10) scale(0.5580,1)" font-size="5.8" fill="#e6ecf8" textLength="17.91" lengthAdjust="spacing" >Diesel</text>
<text transform="translate(173.70,343.80) scale(0.5580,1)" font-size="5.8" fill="#e6ecf8" textLength="34.03" lengthAdjust="spacing" >Generators,</text>
<text transform="translate(173.70,351.50) scale(0.5580,1)" font-size="5.8" fill="#e6ecf8" textLength="22.57" lengthAdjust="spacing" >Boiler &amp;</text>
<text transform="translate(173.70,359.20) scale(0.5580,1)" font-size="5.8" fill="#e6ecf8" textLength="30.45" lengthAdjust="spacing" >Incinerator</text>
<text transform="translate(173.70,366.90) scale(0.5580,1)" font-size="5.8" fill="#e6ecf8" textLength="17.19" lengthAdjust="spacing" >Room</text>
<text x="220.22" y="351.20" font-size="5.2" fill="#3a3418" text-anchor="middle" textLength="2.00" lengthAdjust="spacingAndGlyphs" >2</text>
<text x="252.78" y="351.20" font-size="5.2" fill="#b8762e" text-anchor="middle" textLength="2.00" lengthAdjust="spacingAndGlyphs" >3</text>
<text x="285.32" y="351.20" font-size="5.2" fill="#b8762e" text-anchor="middle" textLength="2.00" lengthAdjust="spacingAndGlyphs" >3</text>
<text x="317.88" y="351.20" font-size="5.2" fill="#4f7f4f" text-anchor="middle" textLength="2.00" lengthAdjust="spacingAndGlyphs" >1</text>
<text x="350.42" y="351.20" font-size="5.2" fill="#4f7f4f" text-anchor="middle" textLength="2.00" lengthAdjust="spacingAndGlyphs" >1</text>
<text x="382.97" y="351.20" font-size="5.2" fill="#4f7f4f" text-anchor="middle" textLength="2.00" lengthAdjust="spacingAndGlyphs" >1</text>
<text x="415.52" y="351.20" font-size="5.2" fill="#4f7f4f" text-anchor="middle" textLength="2.00" lengthAdjust="spacingAndGlyphs" >1</text>
<text x="448.07" y="351.20" font-size="5.2" fill="#4f7f4f" text-anchor="middle" textLength="2.00" lengthAdjust="spacingAndGlyphs" >1</text>
<text x="480.62" y="351.20" font-size="5.2" fill="#4f7f4f" text-anchor="middle" textLength="2.00" lengthAdjust="spacingAndGlyphs" >1</text>
<text x="513.17" y="351.20" font-size="5.2" fill="#4f7f4f" text-anchor="middle" textLength="2.00" lengthAdjust="spacingAndGlyphs" >1</text>
<text x="545.72" y="351.20" font-size="5.2" fill="#4f7f4f" text-anchor="middle" textLength="2.00" lengthAdjust="spacingAndGlyphs" >1</text>
<text x="578.27" y="351.20" font-size="5.2" fill="#4f7f4f" text-anchor="middle" textLength="2.00" lengthAdjust="spacingAndGlyphs" >1</text>
<text x="610.82" y="351.20" font-size="5.2" fill="#4f7f4f" text-anchor="middle" textLength="2.00" lengthAdjust="spacingAndGlyphs" >1</text>
<text x="643.37" y="351.20" font-size="5.2" fill="#4f7f4f" text-anchor="middle" textLength="2.00" lengthAdjust="spacingAndGlyphs" >1</text>
<text x="675.92" y="351.20" font-size="5.2" fill="#4f7f4f" text-anchor="middle" textLength="2.00" lengthAdjust="spacingAndGlyphs" >1</text>
<text x="708.47" y="351.20" font-size="5.2" fill="#4f7f4f" text-anchor="middle" textLength="2.00" lengthAdjust="spacingAndGlyphs" >1</text>
<text x="838.67" y="351.20" font-size="5.2" fill="#4f7f4f" text-anchor="middle" textLength="2.00" lengthAdjust="spacingAndGlyphs" >1</text>
<rect x="236.50" y="373.00" width="33.15" height="32.90" fill="#8a7a24" />
<rect x="269.05" y="373.00" width="33.15" height="32.90" fill="#2a5c2a" />
<rect x="301.60" y="373.00" width="33.15" height="32.90" fill="#2a5c2a" />
<rect x="334.15" y="373.00" width="33.15" height="32.90" fill="#2a5c2a" />
<rect x="366.70" y="373.00" width="33.15" height="32.90" fill="#2a5c2a" />
<rect x="399.25" y="373.00" width="33.15" height="32.90" fill="#2a5c2a" />
<rect x="431.80" y="373.00" width="33.15" height="32.90" fill="#2a5c2a" />
<rect x="464.35" y="373.00" width="33.15" height="32.90" fill="#2a5c2a" />
<rect x="496.90" y="373.00" width="33.15" height="32.90" fill="#2a5c2a" />
<rect x="529.45" y="373.00" width="33.15" height="32.90" fill="#2a5c2a" />
<rect x="562.00" y="373.00" width="33.15" height="32.90" fill="#2a5c2a" />
<rect x="594.55" y="373.00" width="33.15" height="32.90" fill="#2a5c2a" />
<rect x="627.10" y="373.00" width="33.15" height="32.90" fill="#2a5c2a" />
<rect x="659.65" y="373.00" width="33.15" height="32.90" fill="#2a5c2a" />
<rect x="692.20" y="373.00" width="33.15" height="32.90" fill="#2a5c2a" />
<rect x="822.40" y="373.00" width="33.15" height="32.90" fill="#2a5c2a" />
<text transform="translate(173.70,383.70) scale(0.5580,1)" font-size="5.8" fill="#e6ecf8" textLength="44.06" lengthAdjust="spacing" >Emg Generator</text>
<text transform="translate(173.70,391.40) scale(0.5580,1)" font-size="5.8" fill="#e6ecf8" textLength="41.55" lengthAdjust="spacing" >&amp; Switchboard</text>
<text transform="translate(173.70,399.10) scale(0.5580,1)" font-size="5.8" fill="#e6ecf8" textLength="17.19" lengthAdjust="spacing" >Room</text>
<text x="252.78" y="391.15" font-size="5.2" fill="#3a3418" text-anchor="middle" textLength="2.00" lengthAdjust="spacingAndGlyphs" >2</text>
<text x="285.32" y="391.15" font-size="5.2" fill="#4f7f4f" text-anchor="middle" textLength="2.00" lengthAdjust="spacingAndGlyphs" >1</text>
<text x="317.88" y="391.15" font-size="5.2" fill="#4f7f4f" text-anchor="middle" textLength="2.00" lengthAdjust="spacingAndGlyphs" >1</text>
<text x="350.42" y="391.15" font-size="5.2" fill="#4f7f4f" text-anchor="middle" textLength="2.00" lengthAdjust="spacingAndGlyphs" >1</text>
<text x="382.97" y="391.15" font-size="5.2" fill="#4f7f4f" text-anchor="middle" textLength="2.00" lengthAdjust="spacingAndGlyphs" >1</text>
<text x="415.52" y="391.15" font-size="5.2" fill="#4f7f4f" text-anchor="middle" textLength="2.00" lengthAdjust="spacingAndGlyphs" >1</text>
<text x="448.07" y="391.15" font-size="5.2" fill="#4f7f4f" text-anchor="middle" textLength="2.00" lengthAdjust="spacingAndGlyphs" >1</text>
<text x="480.62" y="391.15" font-size="5.2" fill="#4f7f4f" text-anchor="middle" textLength="2.00" lengthAdjust="spacingAndGlyphs" >1</text>
<text x="513.17" y="391.15" font-size="5.2" fill="#4f7f4f" text-anchor="middle" textLength="2.00" lengthAdjust="spacingAndGlyphs" >1</text>
<text x="545.72" y="391.15" font-size="5.2" fill="#4f7f4f" text-anchor="middle" textLength="2.00" lengthAdjust="spacingAndGlyphs" >1</text>
<text x="578.27" y="391.15" font-size="5.2" fill="#4f7f4f" text-anchor="middle" textLength="2.00" lengthAdjust="spacingAndGlyphs" >1</text>
<text x="610.82" y="391.15" font-size="5.2" fill="#4f7f4f" text-anchor="middle" textLength="2.00" lengthAdjust="spacingAndGlyphs" >1</text>
<text x="643.37" y="391.15" font-size="5.2" fill="#4f7f4f" text-anchor="middle" textLength="2.00" lengthAdjust="spacingAndGlyphs" >1</text>
<text x="675.92" y="391.15" font-size="5.2" fill="#4f7f4f" text-anchor="middle" textLength="2.00" lengthAdjust="spacingAndGlyphs" >1</text>
<text x="708.47" y="391.15" font-size="5.2" fill="#4f7f4f" text-anchor="middle" textLength="2.00" lengthAdjust="spacingAndGlyphs" >1</text>
<text x="838.67" y="391.15" font-size="5.2" fill="#4f7f4f" text-anchor="middle" textLength="2.00" lengthAdjust="spacingAndGlyphs" >1</text>
<rect x="236.50" y="405.30" width="33.15" height="25.00" fill="#2a5c2a" />
<rect x="301.60" y="405.30" width="33.15" height="25.00" fill="#2a5c2a" />
<rect x="334.15" y="405.30" width="33.15" height="25.00" fill="#2a5c2a" />
<rect x="366.70" y="405.30" width="33.15" height="25.00" fill="#2a5c2a" />
<rect x="399.25" y="405.30" width="33.15" height="25.00" fill="#2a5c2a" />
<rect x="431.80" y="405.30" width="33.15" height="25.00" fill="#2a5c2a" />
<rect x="464.35" y="405.30" width="33.15" height="25.00" fill="#2a5c2a" />
<rect x="496.90" y="405.30" width="33.15" height="25.00" fill="#2a5c2a" />
<rect x="529.45" y="405.30" width="33.15" height="25.00" fill="#2a5c2a" />
<rect x="562.00" y="405.30" width="33.15" height="25.00" fill="#2a5c2a" />
<rect x="594.55" y="405.30" width="33.15" height="25.00" fill="#2a5c2a" />
<rect x="627.10" y="405.30" width="33.15" height="25.00" fill="#2a5c2a" />
<rect x="659.65" y="405.30" width="33.15" height="25.00" fill="#2a5c2a" />
<rect x="692.20" y="405.30" width="33.15" height="25.00" fill="#2a5c2a" />
<rect x="822.40" y="405.30" width="33.15" height="25.00" fill="#2a5c2a" />
<text transform="translate(173.70,416.00) scale(0.5580,1)" font-size="5.8" fill="#e6ecf8" textLength="35.46" lengthAdjust="spacing" >Emg Battery</text>
<text transform="translate(173.70,423.70) scale(0.5580,1)" font-size="5.8" fill="#e6ecf8" textLength="17.19" lengthAdjust="spacing" >Room</text>
<text x="252.78" y="419.50" font-size="5.2" fill="#4f7f4f" text-anchor="middle" textLength="2.00" lengthAdjust="spacingAndGlyphs" >1</text>
<text x="317.88" y="419.50" font-size="5.2" fill="#4f7f4f" text-anchor="middle" textLength="2.00" lengthAdjust="spacingAndGlyphs" >1</text>
<text x="350.42" y="419.50" font-size="5.2" fill="#4f7f4f" text-anchor="middle" textLength="2.00" lengthAdjust="spacingAndGlyphs" >1</text>
<text x="382.97" y="419.50" font-size="5.2" fill="#4f7f4f" text-anchor="middle" textLength="2.00" lengthAdjust="spacingAndGlyphs" >1</text>
<text x="415.52" y="419.50" font-size="5.2" fill="#4f7f4f" text-anchor="middle" textLength="2.00" lengthAdjust="spacingAndGlyphs" >1</text>
<text x="448.07" y="419.50" font-size="5.2" fill="#4f7f4f" text-anchor="middle" textLength="2.00" lengthAdjust="spacingAndGlyphs" >1</text>
<text x="480.62" y="419.50" font-size="5.2" fill="#4f7f4f" text-anchor="middle" textLength="2.00" lengthAdjust="spacingAndGlyphs" >1</text>
<text x="513.17" y="419.50" font-size="5.2" fill="#4f7f4f" text-anchor="middle" textLength="2.00" lengthAdjust="spacingAndGlyphs" >1</text>
<text x="545.72" y="419.50" font-size="5.2" fill="#4f7f4f" text-anchor="middle" textLength="2.00" lengthAdjust="spacingAndGlyphs" >1</text>
<text x="578.27" y="419.50" font-size="5.2" fill="#4f7f4f" text-anchor="middle" textLength="2.00" lengthAdjust="spacingAndGlyphs" >1</text>
<text x="610.82" y="419.50" font-size="5.2" fill="#4f7f4f" text-anchor="middle" textLength="2.00" lengthAdjust="spacingAndGlyphs" >1</text>
<text x="643.37" y="419.50" font-size="5.2" fill="#4f7f4f" text-anchor="middle" textLength="2.00" lengthAdjust="spacingAndGlyphs" >1</text>
<text x="675.92" y="419.50" font-size="5.2" fill="#4f7f4f" text-anchor="middle" textLength="2.00" lengthAdjust="spacingAndGlyphs" >1</text>
<text x="708.47" y="419.50" font-size="5.2" fill="#4f7f4f" text-anchor="middle" textLength="2.00" lengthAdjust="spacingAndGlyphs" >1</text>
<text x="838.67" y="419.50" font-size="5.2" fill="#4f7f4f" text-anchor="middle" textLength="2.00" lengthAdjust="spacingAndGlyphs" >1</text>
<rect x="203.95" y="429.70" width="33.15" height="32.90" fill="#8a2b22" />
<rect x="236.50" y="429.70" width="33.15" height="32.90" fill="#8c5205" />
<rect x="269.05" y="429.70" width="33.15" height="32.90" fill="#8a2b22" />
<rect x="301.60" y="429.70" width="33.15" height="32.90" fill="#2a5c2a" />
<rect x="334.15" y="429.70" width="33.15" height="32.90" fill="#2a5c2a" />
<rect x="366.70" y="429.70" width="33.15" height="32.90" fill="#2a5c2a" />
<rect x="399.25" y="429.70" width="33.15" height="32.90" fill="#2a5c2a" />
<rect x="431.80" y="429.70" width="33.15" height="32.90" fill="#2a5c2a" />
<rect x="464.35" y="429.70" width="33.15" height="32.90" fill="#2a5c2a" />
<rect x="496.90" y="429.70" width="33.15" height="32.90" fill="#2a5c2a" />
<rect x="529.45" y="429.70" width="33.15" height="32.90" fill="#2a5c2a" />
<rect x="562.00" y="429.70" width="33.15" height="32.90" fill="#2a5c2a" />
<rect x="594.55" y="429.70" width="33.15" height="32.90" fill="#2a5c2a" />
<rect x="627.10" y="429.70" width="33.15" height="32.90" fill="#2a5c2a" />
<rect x="659.65" y="429.70" width="33.15" height="32.90" fill="#2a5c2a" />
<rect x="692.20" y="429.70" width="33.15" height="32.90" fill="#2a5c2a" />
<rect x="822.40" y="429.70" width="33.15" height="32.90" fill="#2a5c2a" />
<text transform="translate(173.70,440.40) scale(0.5580,1)" font-size="5.8" fill="#e6ecf8" textLength="43.34" lengthAdjust="spacing" >Eng Auxiliary &amp;</text>
<text transform="translate(173.70,448.10) scale(0.5580,1)" font-size="5.8" fill="#e6ecf8" textLength="30.45" lengthAdjust="spacing" >Propulsion</text>
<text transform="translate(173.70,455.80) scale(0.5580,1)" font-size="5.8" fill="#e6ecf8" textLength="17.19" lengthAdjust="spacing" >Room</text>
<text x="220.22" y="447.85" font-size="5.2" fill="#c8645a" text-anchor="middle" textLength="2.00" lengthAdjust="spacingAndGlyphs" >4</text>
<text x="252.78" y="447.85" font-size="5.2" fill="#b8762e" text-anchor="middle" textLength="2.00" lengthAdjust="spacingAndGlyphs" >3</text>
<text x="285.32" y="447.85" font-size="5.2" fill="#c8645a" text-anchor="middle" textLength="2.00" lengthAdjust="spacingAndGlyphs" >4</text>
<text x="317.88" y="447.85" font-size="5.2" fill="#4f7f4f" text-anchor="middle" textLength="2.00" lengthAdjust="spacingAndGlyphs" >1</text>
<text x="350.42" y="447.85" font-size="5.2" fill="#4f7f4f" text-anchor="middle" textLength="2.00" lengthAdjust="spacingAndGlyphs" >1</text>
<text x="382.97" y="447.85" font-size="5.2" fill="#4f7f4f" text-anchor="middle" textLength="2.00" lengthAdjust="spacingAndGlyphs" >1</text>
<text x="415.52" y="447.85" font-size="5.2" fill="#4f7f4f" text-anchor="middle" textLength="2.00" lengthAdjust="spacingAndGlyphs" >1</text>
<text x="448.07" y="447.85" font-size="5.2" fill="#4f7f4f" text-anchor="middle" textLength="2.00" lengthAdjust="spacingAndGlyphs" >1</text>
<text x="480.62" y="447.85" font-size="5.2" fill="#4f7f4f" text-anchor="middle" textLength="2.00" lengthAdjust="spacingAndGlyphs" >1</text>
<text x="513.17" y="447.85" font-size="5.2" fill="#4f7f4f" text-anchor="middle" textLength="2.00" lengthAdjust="spacingAndGlyphs" >1</text>
<text x="545.72" y="447.85" font-size="5.2" fill="#4f7f4f" text-anchor="middle" textLength="2.00" lengthAdjust="spacingAndGlyphs" >1</text>
<text x="578.27" y="447.85" font-size="5.2" fill="#4f7f4f" text-anchor="middle" textLength="2.00" lengthAdjust="spacingAndGlyphs" >1</text>
<text x="610.82" y="447.85" font-size="5.2" fill="#4f7f4f" text-anchor="middle" textLength="2.00" lengthAdjust="spacingAndGlyphs" >1</text>
<text x="643.37" y="447.85" font-size="5.2" fill="#4f7f4f" text-anchor="middle" textLength="2.00" lengthAdjust="spacingAndGlyphs" >1</text>
<text x="675.92" y="447.85" font-size="5.2" fill="#4f7f4f" text-anchor="middle" textLength="2.00" lengthAdjust="spacingAndGlyphs" >1</text>
<text x="708.47" y="447.85" font-size="5.2" fill="#4f7f4f" text-anchor="middle" textLength="2.00" lengthAdjust="spacingAndGlyphs" >1</text>
<text x="838.67" y="447.85" font-size="5.2" fill="#4f7f4f" text-anchor="middle" textLength="2.00" lengthAdjust="spacingAndGlyphs" >1</text>
<rect x="43.00" y="449.00" width="100.50" height="5.00" fill="#ffffff" />
<text transform="translate(44.00,453.60) scale(0.7114,1)" font-size="3.8" fill="#222" textLength="134.95" lengthAdjust="spacing" >vesselmanagementsystem.com/MSCA/ComponentAssessment?id=1</text>
<rect x="143.50" y="449.00" width="7.00" height="5.00" fill="#22252c" />
</g>
<rect x="326.00" y="251.30" width="877.00" height="438.70" fill="#191c26" />
<rect x="326.00" y="251.30" width="877.00" height="25.50" fill="#2a3043" />
<rect x="329.00" y="258.85" width="8.80" height="1.10" fill="#e6e6e6" />
<rect x="329.00" y="261.55" width="8.80" height="1.10" fill="#e6e6e6" />
<rect x="329.00" y="264.25" width="8.80" height="1.10" fill="#e6e6e6" />
<clipPath id="lg2"><rect x="344.65" y="251.85" width="12.550000000000011" height="20.7"/></clipPath>
<g clip-path="url(#lg2)">
<circle cx="355" cy="262.2" r="7.35" stroke="#1cbc48" stroke-width="2.0" fill="none"/>
<circle cx="355.6" cy="262.2" r="5.01" stroke="#1ea6e0" stroke-width="1.4" fill="none"/>
</g>
<text transform="translate(358.50,267.00) scale(0.5686,1)" font-size="12" fill="#ececec" textLength="221.24" lengthAdjust="spacing" >VESSEL MANAGEMENT SYSTEM</text>
<circle cx="1191.9" cy="262.3" r="5.9" fill="#f0f0f0"/>
<circle cx="1191.9" cy="260.53000000000003" r="1.9470000000000003" fill="#2a3043"/>
<path d="M1188.2420000000002,265.545 Q1191.9,261.415 1195.558,265.545 Q1191.9,267.90500000000003 1188.2420000000002,265.545Z" fill="#2a3043"/>
<rect x="326.00" y="276.80" width="113.60" height="413.20" fill="#191c26" />
<rect x="326.00" y="307.00" width="113.60" height="27.20" fill="#53565d" />
<rect x="437.60" y="276.80" width="2.00" height="413.20" fill="#232733" />
<rect x="326.00" y="307.00" width="113.60" height="27.20" fill="#53565d" />
<rect x="439.60" y="276.80" width="9.00" height="413.20" fill="#121316" />
<rect x="1196.00" y="276.80" width="7.00" height="413.20" fill="#121316" />
<path d="M328.95,294.27 L334.45,289.69 L339.95,294.27" stroke="#f2f2f2" stroke-width="1.64" stroke-linecap="round" fill="none"/>
<rect x="336.70" y="289.47" width="1.62" height="3.27" fill="#f2f2f2" />
<path d="M334.45,292.09 L338.45,295.14 L338.45,299.50 L335.70,299.50 L335.70,296.45 L333.45,296.45 L333.45,299.50 L330.45,299.50 L330.45,295.14 Z" fill="#f2f2f2"/>
<path d="M331.60,319.62 L333.40,316.32 Q334.00,315.44 334.72,316.32 L336.64,319.40" stroke="#f2f2f2" stroke-width="2.04" fill="none"/>
<path d="M334.96,319.62 L338.32,320.72 L338.08,317.42Z" fill="#f2f2f2"/>
<path d="M330.64,320.50 L328.96,323.58 Q328.60,325.12 330.40,325.12 L332.80,325.12" stroke="#f2f2f2" stroke-width="2.04" fill="none"/>
<path d="M334.60,325.12 L337.60,325.12 Q339.40,325.12 338.80,323.25 L337.84,321.60" stroke="#f2f2f2" stroke-width="2.04" fill="none"/>
<path d="M334.24,322.92 L334.24,326.88 L331.60,324.90Z" fill="#f2f2f2"/>
<path d="M329.20,343.50 L329.20,352.30 L340.50,352.30" stroke="#f2f2f2" stroke-width="1.5" fill="none"/>
<path d="M330.42,351.60 L330.42,349.01 L333.06,346.82 L335.46,348.25 L339.54,344.64 L339.54,351.60 Z" fill="#f2f2f2"/>
<path d="M330.42,351.10 L333.06,349.20 L335.46,350.62 L339.54,347.49" stroke="#191c26" stroke-width="1.1" fill="none"/>
<rect x="329.80" y="371.80" width="8.40" height="8.97" stroke="#f2f2f2" stroke-width="1.6" fill="none" rx="0.8"/>
<rect x="329.00" y="371.23" width="10.00" height="2.76" fill="#f2f2f2" />
<rect x="331.00" y="369.50" width="1.60" height="3.22" fill="#f2f2f2" />
<rect x="335.40" y="369.50" width="1.60" height="3.22" fill="#f2f2f2" />
<path d="M331.70,376.86 L333.50,378.70 L336.60,375.25" stroke="#f2f2f2" stroke-width="1.4" fill="none"/>
<rect x="328.00" y="399.65" width="12.00" height="7.35" fill="#f2f2f2" />
<rect x="331.6" y="397.0" width="4.800000000000001" height="3.675" stroke="#f2f2f2" stroke-width="1.2" fill="none"/>
<rect x="328.00" y="402.59" width="12.00" height="1.05" fill="#191c26" />
<rect x="330.40" y="401.75" width="1.44" height="3.15" fill="#f2f2f2" />
<rect x="336.16" y="401.75" width="1.44" height="3.15" fill="#f2f2f2" />
<text transform="translate(355.00,297.60) scale(0.6208,1)" font-size="9" fill="#e2e4e8" textLength="26.10" lengthAdjust="spacing" >Home</text>
<text transform="translate(355.00,323.80) scale(0.5625,1)" font-size="9" fill="#e2e4e8" textLength="28.26" lengthAdjust="spacing" >EPMD</text>
<text transform="translate(355.00,351.60) scale(0.5625,1)" font-size="9" fill="#e2e4e8" textLength="28.26" lengthAdjust="spacing" >MSCA</text>
<text transform="translate(355.00,378.70) scale(0.6225,1)" font-size="9" fill="#e2e4e8" textLength="25.54" lengthAdjust="spacing" >R/MG</text>
<text transform="translate(355.00,405.40) scale(0.5916,1)" font-size="9" fill="#e2e4e8" textLength="55.28" lengthAdjust="spacing" >Admin Tasks</text>
<rect x="459.70" y="291.90" width="724.60" height="1.00" fill="#2c303c" />
<rect x="459.70" y="314.20" width="724.60" height="1.00" fill="#2c303c" />
<rect x="459.70" y="337.40" width="724.60" height="1.00" fill="#2c303c" />
<text transform="translate(515.30,284.60) scale(0.5415,1)" font-size="8.2" fill="#b8bcc4" text-anchor="end" textLength="53.56" lengthAdjust="spacing" >27 Aug 2020</text>
<text transform="translate(515.30,306.70) scale(0.5415,1)" font-size="8.2" fill="#e8eaee" text-anchor="end" textLength="53.56" lengthAdjust="spacing" >28 Aug 2020</text>
<text transform="translate(515.30,329.20) scale(0.5415,1)" font-size="8.2" fill="#e8eaee" text-anchor="end" textLength="53.56" lengthAdjust="spacing" >29 Aug 2020</text>
<text x="631.80" y="329.20" font-size="8.2" fill="#e8eaee" text-anchor="middle" textLength="3.60" lengthAdjust="spacingAndGlyphs" >5</text>
<text transform="translate(913.50,284.70) scale(0.6337,1)" font-size="8.2" fill="#b8bcc4" textLength="13.25" lengthAdjust="spacing" >0.3</text>
<text transform="translate(913.50,306.90) scale(0.6337,1)" font-size="8.2" fill="#dfe2e8" textLength="13.25" lengthAdjust="spacing" >0.5</text>
<text transform="translate(913.50,328.90) scale(0.6337,1)" font-size="8.2" fill="#dfe2e8" textLength="13.25" lengthAdjust="spacing" >0.3</text>
<text x="1102.80" y="284.50" font-size="7.6" fill="#b8bcc4" text-anchor="middle" textLength="4.00" lengthAdjust="spacingAndGlyphs" >6</text>
<path d="M1164.425,281.84000000000003 L1164.425,280.16 A2.625,2.625 0 0 1 1169.675,280.16 L1169.675,281.84000000000003" stroke="#f4f4f4" stroke-width="1.6" fill="none"/>
<rect x="1161.80" y="281.50" width="10.50" height="6.50" fill="#f4f4f4" rx="0.8"/>
<path d="M1164.425,303.64000000000004 L1164.425,301.96000000000004 A2.625,2.625 0 0 1 1169.675,301.96000000000004 L1169.675,303.64000000000004" stroke="#f4f4f4" stroke-width="1.6" fill="none"/>
<rect x="1161.80" y="303.30" width="10.50" height="6.50" fill="#f4f4f4" rx="0.8"/>
<path d="M1164.425,325.64000000000004 L1164.425,323.96000000000004 A2.625,2.625 0 0 1 1169.675,323.96000000000004 L1169.675,325.64000000000004" stroke="#f4f4f4" stroke-width="1.6" fill="none"/>
<rect x="1161.80" y="325.30" width="10.50" height="6.50" fill="#f4f4f4" rx="0.8"/>
<rect x="326" y="276.8" width="877" height="4" fill="url(#hsh)"/>
<rect x="326.00" y="251.30" width="877.00" height="25.50" fill="#2a3043" />
<rect x="329.00" y="258.85" width="8.80" height="1.10" fill="#e6e6e6" />
<rect x="329.00" y="261.55" width="8.80" height="1.10" fill="#e6e6e6" />
<rect x="329.00" y="264.25" width="8.80" height="1.10" fill="#e6e6e6" />
<clipPath id="lg3"><rect x="344.65" y="251.85" width="12.550000000000011" height="20.7"/></clipPath>
<g clip-path="url(#lg3)">
<circle cx="355" cy="262.2" r="7.35" stroke="#1cbc48" stroke-width="2.0" fill="none"/>
<circle cx="355.6" cy="262.2" r="5.01" stroke="#1ea6e0" stroke-width="1.4" fill="none"/>
</g>
<text transform="translate(358.50,267.00) scale(0.5686,1)" font-size="12" fill="#ececec" textLength="221.24" lengthAdjust="spacing" >VESSEL MANAGEMENT SYSTEM</text>
<circle cx="1191.9" cy="262.3" r="5.9" fill="#f0f0f0"/>
<circle cx="1191.9" cy="260.53000000000003" r="1.9470000000000003" fill="#2a3043"/>
<path d="M1188.2420000000002,265.545 Q1191.9,261.415 1195.558,265.545 Q1191.9,267.90500000000003 1188.2420000000002,265.545Z" fill="#2a3043"/>
<text transform="translate(1020.70,354.00) scale(0.5157,1)" font-size="7.5" fill="#dfe2e8" textLength="61.08" lengthAdjust="spacing" >Rows per page:</text>
<text transform="translate(1067.80,354.00) scale(0.4948,1)" font-size="7.5" fill="#e8eaee" textLength="9.70" lengthAdjust="spacing" >30</text>
<path d="M1080.5,350 L1085.5,350 L1083,352.6Z" fill="#eeeeee"/>
<rect x="1067.80" y="358.50" width="19.80" height="1.00" fill="#9a9ea6" />
<text transform="translate(1105.60,354.00) scale(0.5296,1)" font-size="7.5" fill="#dfe2e8" textLength="39.27" lengthAdjust="spacing" >1-29 of 29</text>
<path d="M1151.2,348.5 L1147.8,351.2 L1151.2,354" stroke="#6a6e78" stroke-width="1" fill="none"/>
<path d="M1170.5,348.5 L1173.9,351.2 L1170.5,354" stroke="#6a6e78" stroke-width="1" fill="none"/>
<rect x="448.80" y="372.10" width="747.20" height="31.20" fill="#52565e" />
<text transform="translate(460.30,393.50) scale(0.5850,1)" font-size="13" fill="#ececee" textLength="49.57" lengthAdjust="spacing" >Graphs</text>
<path d="M1176.2,390.2 L1179.1,387.2 L1182,390.2" stroke="#f0f0f0" stroke-width="1.3" fill="none"/>
<text transform="translate(460.30,423.00) scale(0.5917,1)" font-size="7.6" fill="#dfe2e8" textLength="57.46" lengthAdjust="spacing" >Graph Format:</text>
<path d="M503.9,412.1 L531,412.1 L531,428 L503.9,428 Q501.9,428 501.9,426 L501.9,414.1 Q501.9,412.1 503.9,412.1Z" fill="#8c5ad2"/>
<rect x="531.00" y="412.10" width="29.80" height="15.90" fill="#0b3fc4" />
<path d="M560.8,412.1 L597.9,412.1 Q599.9,412.1 599.9,414.1 L599.9,426 Q599.9,428 597.9,428 L560.8,428Z" fill="#0f5b60"/>
<text transform="translate(516.40,423.20) scale(0.6441,1)" font-size="7.6" fill="#f0eaf8" text-anchor="middle" textLength="24.07" lengthAdjust="spacing" >AREA</text>
<text transform="translate(545.90,423.20) scale(0.7126,1)" font-size="7.6" fill="#bcd0ff" text-anchor="middle" textLength="19.65" lengthAdjust="spacing" >LINE</text>
<text transform="translate(580.30,423.20) scale(0.6789,1)" font-size="7.6" fill="#cfe3e3" text-anchor="middle" textLength="38.30" lengthAdjust="spacing" >COLUMN</text>
<rect x="1146.00" y="417.30" width="14.20" height="6.60" fill="#4a4d55" rx="3.3"/>
<circle cx="1146.9" cy="420.6" r="5" fill="#dedede"/>
<text transform="translate(1163.70,423.40) scale(0.5676,1)" font-size="7.6" fill="#dfe2e8" textLength="37.18" lengthAdjust="spacing" >Averages</text>
<circle cx="1144.6" cy="450.8" r="3.1" stroke="#7f8796" stroke-width="0.9" fill="none"/>
<rect x="1143.00" y="450.40" width="3.20" height="0.80" fill="#7f8796" />
<circle cx="1154" cy="450.8" r="3.1" stroke="#7f8796" stroke-width="0.9" fill="none"/>
<rect x="1152.40" y="450.40" width="3.20" height="0.80" fill="#7f8796" />
<rect x="1162" y="447.8" width="5.6" height="6" stroke="#444a56" stroke-width="0.8" fill="none"/>
<path d="M1172.7,451.2 L1176.35,447.6 L1180,451.2 L1179,451.2 L1179,454.2 L1173.7,454.2 L1173.7,451.2Z" fill="#8aa4c4"/>
<circle cx="774.8000000000001" cy="461.6" r="2.6" fill="#d32f2f"/>
<text transform="translate(779.00,464.40) scale(0.6510,1)" font-size="8" fill="#cfd3da" textLength="52.23" lengthAdjust="spacing" >Investigation</text>
<circle cx="820.5" cy="461.6" r="2.6" fill="#7e57c2"/>
<text transform="translate(824.70,464.40) scale(0.6545,1)" font-size="8" fill="#cfd3da" textLength="156.31" lengthAdjust="spacing" >Comminuted Food Waste to Sea (m3)</text>
<circle cx="933.9" cy="461.6" r="2.6" fill="#1fa9f2"/>
<text transform="translate(937.70,464.40) scale(0.6494,1)" font-size="8" fill="#cfd3da" textLength="120.12" lengthAdjust="spacing" >Food Waste Incinerated (m3)</text>
<circle cx="1023.6" cy="461.6" r="2.6" fill="#4caf50"/>
<text transform="translate(1028.40,464.40) scale(0.6473,1)" font-size="8" fill="#cfd3da" textLength="229.55" lengthAdjust="spacing" >Dry mixed domestic garbage to Shore for Disposal (m3)</text>
<rect x="488.90" y="472.10" width="693.10" height="1.00" fill="#454955" />
<text transform="translate(479.80,473.90) scale(0.5891,1)" font-size="7" fill="#b8bcc4" text-anchor="end" textLength="20.37" lengthAdjust="spacing" >12.00</text>
<rect x="488.90" y="513.65" width="693.10" height="1.00" fill="#454955" />
<text transform="translate(479.80,515.45) scale(0.5681,1)" font-size="7" fill="#b8bcc4" text-anchor="end" textLength="15.84" lengthAdjust="spacing" >9.00</text>
<rect x="488.90" y="555.20" width="693.10" height="1.00" fill="#454955" />
<text transform="translate(479.80,557.00) scale(0.5681,1)" font-size="7" fill="#b8bcc4" text-anchor="end" textLength="15.84" lengthAdjust="spacing" >6.00</text>
<rect x="488.90" y="596.75" width="693.10" height="1.00" fill="#454955" />
<text transform="translate(479.80,598.55) scale(0.5681,1)" font-size="7" fill="#b8bcc4" text-anchor="end" textLength="15.84" lengthAdjust="spacing" >3.00</text>
<rect x="488.90" y="638.30" width="693.10" height="1.00" fill="#454955" />
<text transform="translate(479.80,640.10) scale(0.5681,1)" font-size="7" fill="#b8bcc4" text-anchor="end" textLength="15.84" lengthAdjust="spacing" >0.00</text>
<rect x="488.40" y="472.60" width="1.00" height="166.20" fill="#454955" />
<rect x="513.05" y="472.60" width="1.00" height="166.20" fill="#454955" />
<rect x="537.70" y="472.60" width="1.00" height="166.20" fill="#454955" />
<rect x="562.35" y="472.60" width="1.00" height="166.20" fill="#454955" />
<rect x="587.00" y="472.60" width="1.00" height="166.20" fill="#454955" />
<rect x="611.65" y="472.60" width="1.00" height="166.20" fill="#454955" />
<rect x="636.30" y="472.60" width="1.00" height="166.20" fill="#454955" />
<rect x="660.95" y="472.60" width="1.00" height="166.20" fill="#454955" />
<rect x="685.60" y="472.60" width="1.00" height="166.20" fill="#454955" />
<rect x="710.25" y="472.60" width="1.00" height="166.20" fill="#454955" />
<rect x="734.90" y="472.60" width="1.00" height="166.20" fill="#454955" />
<rect x="759.55" y="472.60" width="1.00" height="166.20" fill="#454955" />
<rect x="784.20" y="472.60" width="1.00" height="166.20" fill="#454955" />
<rect x="808.85" y="472.60" width="1.00" height="166.20" fill="#454955" />
<rect x="833.50" y="472.60" width="1.00" height="166.20" fill="#454955" />
<rect x="858.15" y="472.60" width="1.00" height="166.20" fill="#454955" />
<rect x="882.80" y="472.60" width="1.00" height="166.20" fill="#454955" />
<rect x="907.45" y="472.60" width="1.00" height="166.20" fill="#454955" />
<rect x="932.10" y="472.60" width="1.00" height="166.20" fill="#454955" />
<rect x="956.75" y="472.60" width="1.00" height="166.20" fill="#454955" />
<rect x="981.40" y="472.60" width="1.00" height="166.20" fill="#454955" />
<rect x="1006.05" y="472.60" width="1.00" height="166.20" fill="#454955" />
<rect x="1030.70" y="472.60" width="1.00" height="166.20" fill="#454955" />
<rect x="1055.35" y="472.60" width="1.00" height="166.20" fill="#454955" />
<rect x="1080.00" y="472.60" width="1.00" height="166.20" fill="#454955" />
<rect x="1104.65" y="472.60" width="1.00" height="166.20" fill="#454955" />
<rect x="1129.30" y="472.60" width="1.00" height="166.20" fill="#454955" />
<rect x="1153.95" y="472.60" width="1.00" height="166.20" fill="#454955" />
<rect x="1178.60" y="472.60" width="1.00" height="166.20" fill="#454955" />
<defs>
<linearGradient id="grr" x1="0" y1="0" x2="0" y2="1"><stop offset="0" stop-color="#d32f2f" stop-opacity="0.4"/><stop offset="0.55" stop-color="#d32f2f" stop-opacity="0.368"/><stop offset="1" stop-color="#a0a0a0" stop-opacity="0.45"/></linearGradient>
<linearGradient id="grp" x1="0" y1="0" x2="0" y2="1"><stop offset="0" stop-color="#7a52c8" stop-opacity="0.48"/><stop offset="0.55" stop-color="#7a52c8" stop-opacity="0.442"/><stop offset="1" stop-color="#9c98b4" stop-opacity="0.45"/></linearGradient>
<linearGradient id="grb" x1="0" y1="0" x2="0" y2="1"><stop offset="0" stop-color="#1fa9f2" stop-opacity="0.4"/><stop offset="0.55" stop-color="#1fa9f2" stop-opacity="0.368"/><stop offset="1" stop-color="#8ab0c8" stop-opacity="0.45"/></linearGradient>
<linearGradient id="grg" x1="0" y1="0" x2="0" y2="1"><stop offset="0" stop-color="#5c9a62" stop-opacity="0.4"/><stop offset="0.55" stop-color="#5c9a62" stop-opacity="0.368"/><stop offset="1" stop-color="#a0b4a2" stop-opacity="0.45"/></linearGradient>
</defs>
<path d="M488.90,569.55 C497.53,569.55 504.92,583.40 513.55,583.40 C522.18,583.40 529.57,555.70 538.20,555.70 C546.83,555.70 554.22,569.55 562.85,569.55 C571.48,569.55 578.87,569.55 587.50,569.55 C596.13,569.55 603.52,555.70 612.15,555.70 C620.78,555.70 628.17,583.40 636.80,583.40 C645.43,583.40 652.82,569.55 661.45,569.55 C670.08,569.55 677.47,583.40 686.10,583.40 C694.73,583.40 702.12,583.40 710.75,583.40 C719.38,583.40 726.77,569.55 735.40,569.55 C744.03,569.55 751.42,583.40 760.05,583.40 C768.68,583.40 776.07,569.55 784.70,569.55 C793.33,569.55 800.72,569.55 809.35,569.55 C817.98,569.55 825.37,638.80 834.00,638.80 C842.63,638.80 850.02,569.55 858.65,569.55 C867.28,569.55 874.67,486.45 883.30,486.45 C891.93,486.45 899.32,638.80 907.95,638.80 C916.58,638.80 923.97,569.55 932.60,569.55 C941.23,569.55 948.62,569.55 957.25,569.55 C965.88,569.55 973.27,583.40 981.90,583.40 C990.53,583.40 997.92,583.40 1006.55,583.40 C1015.18,583.40 1022.57,638.80 1031.20,638.80 C1039.83,638.80 1047.22,500.30 1055.85,500.30 C1064.48,500.30 1071.87,638.80 1080.50,638.80 C1089.13,638.80 1096.52,569.55 1105.15,569.55 C1113.78,569.55 1121.17,638.80 1129.80,638.80 C1138.43,638.80 1145.82,638.80 1154.45,638.80 C1163.08,638.80 1170.47,569.55 1179.10,569.55 L1179.10,638.8 L488.90,638.8Z" fill="url(#grp)"/>
<path d="M488.90,631.88 C497.53,631.88 504.92,633.26 513.55,633.26 C522.18,633.26 529.57,631.88 538.20,631.88 C546.83,631.88 554.22,627.72 562.85,627.72 C571.48,627.72 578.87,631.88 587.50,631.88 C596.13,631.88 603.52,636.03 612.15,636.03 C620.78,636.03 628.17,633.26 636.80,633.26 C645.43,633.26 652.82,631.88 661.45,631.88 C670.08,631.88 677.47,631.88 686.10,631.88 C694.73,631.88 702.12,630.49 710.75,630.49 C719.38,630.49 726.77,637.41 735.40,637.41 C744.03,637.41 751.42,631.88 760.05,631.88 C768.68,631.88 776.07,631.88 784.70,631.88 C793.33,631.88 800.72,631.88 809.35,631.88 C817.98,631.88 825.37,629.10 834.00,629.10 C842.63,629.10 850.02,631.88 858.65,631.88 C867.28,631.88 874.67,629.10 883.30,629.10 C891.93,629.10 899.32,638.80 907.95,638.80 C916.58,638.80 923.97,622.18 932.60,622.18 C941.23,622.18 948.62,631.88 957.25,631.88 C965.88,631.88 973.27,633.26 981.90,633.26 C990.53,633.26 997.92,638.80 1006.55,638.80 C1015.18,638.80 1022.57,634.64 1031.20,634.64 C1039.83,634.64 1047.22,630.49 1055.85,630.49 C1064.48,630.49 1071.87,626.33 1080.50,626.33 C1089.13,626.33 1096.52,631.88 1105.15,631.88 C1113.78,631.88 1121.17,634.64 1129.80,634.64 C1138.43,634.64 1145.82,631.88 1154.45,631.88 C1163.08,631.88 1170.47,634.64 1179.10,634.64 L1179.10,638.8 L488.90,638.8Z" fill="url(#grb)"/>
<path d="M488.90,638.80 C497.53,638.80 504.92,638.80 513.55,638.80 C522.18,638.80 529.57,569.55 538.20,569.55 C546.83,569.55 554.22,638.80 562.85,638.80 C571.48,638.80 578.87,638.80 587.50,638.80 C596.13,638.80 603.52,638.80 612.15,638.80 C620.78,638.80 628.17,624.95 636.80,624.95 C645.43,624.95 652.82,638.80 661.45,638.80 C670.08,638.80 677.47,611.10 686.10,611.10 C694.73,611.10 702.12,638.80 710.75,638.80 C719.38,638.80 726.77,638.80 735.40,638.80 C744.03,638.80 751.42,611.10 760.05,611.10 C768.68,611.10 776.07,638.80 784.70,638.80 C793.33,638.80 800.72,638.80 809.35,638.80 C817.98,638.80 825.37,597.25 834.00,597.25 C842.63,597.25 850.02,638.80 858.65,638.80 C867.28,638.80 874.67,638.80 883.30,638.80 C891.93,638.80 899.32,597.25 907.95,597.25 C916.58,597.25 923.97,638.80 932.60,638.80 C941.23,638.80 948.62,638.80 957.25,638.80 C965.88,638.80 973.27,638.80 981.90,638.80 C990.53,638.80 997.92,597.25 1006.55,597.25 C1015.18,597.25 1022.57,638.80 1031.20,638.80 C1039.83,638.80 1047.22,638.80 1055.85,638.80 C1064.48,638.80 1071.87,638.80 1080.50,638.80 C1089.13,638.80 1096.52,638.80 1105.15,638.80 C1113.78,638.80 1121.17,555.70 1129.80,555.70 C1138.43,555.70 1145.82,638.80 1154.45,638.80 C1163.08,638.80 1170.47,638.80 1179.10,638.80 L1179.10,638.8 L488.90,638.8Z" fill="url(#grg)"/>
<rect x="488.90" y="472.10" width="693.10" height="1.00" fill="#8a8e9a" opacity="0.18"/>
<rect x="488.90" y="513.65" width="693.10" height="1.00" fill="#8a8e9a" opacity="0.18"/>
<rect x="488.90" y="555.20" width="693.10" height="1.00" fill="#8a8e9a" opacity="0.18"/>
<rect x="488.90" y="596.75" width="693.10" height="1.00" fill="#8a8e9a" opacity="0.18"/>
<rect x="488.90" y="638.30" width="693.10" height="1.00" fill="#8a8e9a" opacity="0.18"/>
<rect x="488.40" y="472.60" width="1.00" height="166.20" fill="#8a8e9a" opacity="0.18"/>
<rect x="513.05" y="472.60" width="1.00" height="166.20" fill="#8a8e9a" opacity="0.18"/>
<rect x="537.70" y="472.60" width="1.00" height="166.20" fill="#8a8e9a" opacity="0.18"/>
<rect x="562.35" y="472.60" width="1.00" height="166.20" fill="#8a8e9a" opacity="0.18"/>
<rect x="587.00" y="472.60" width="1.00" height="166.20" fill="#8a8e9a" opacity="0.18"/>
<rect x="611.65" y="472.60" width="1.00" height="166.20" fill="#8a8e9a" opacity="0.18"/>
<rect x="636.30" y="472.60" width="1.00" height="166.20" fill="#8a8e9a" opacity="0.18"/>
<rect x="660.95" y="472.60" width="1.00" height="166.20" fill="#8a8e9a" opacity="0.18"/>
<rect x="685.60" y="472.60" width="1.00" height="166.20" fill="#8a8e9a" opacity="0.18"/>
<rect x="710.25" y="472.60" width="1.00" height="166.20" fill="#8a8e9a" opacity="0.18"/>
<rect x="734.90" y="472.60" width="1.00" height="166.20" fill="#8a8e9a" opacity="0.18"/>
<rect x="759.55" y="472.60" width="1.00" height="166.20" fill="#8a8e9a" opacity="0.18"/>
<rect x="784.20" y="472.60" width="1.00" height="166.20" fill="#8a8e9a" opacity="0.18"/>
<rect x="808.85" y="472.60" width="1.00" height="166.20" fill="#8a8e9a" opacity="0.18"/>
<rect x="833.50" y="472.60" width="1.00" height="166.20" fill="#8a8e9a" opacity="0.18"/>
<rect x="858.15" y="472.60" width="1.00" height="166.20" fill="#8a8e9a" opacity="0.18"/>
<rect x="882.80" y="472.60" width="1.00" height="166.20" fill="#8a8e9a" opacity="0.18"/>
<rect x="907.45" y="472.60" width="1.00" height="166.20" fill="#8a8e9a" opacity="0.18"/>
<rect x="932.10" y="472.60" width="1.00" height="166.20" fill="#8a8e9a" opacity="0.18"/>
<rect x="956.75" y="472.60" width="1.00" height="166.20" fill="#8a8e9a" opacity="0.18"/>
<rect x="981.40" y="472.60" width="1.00" height="166.20" fill="#8a8e9a" opacity="0.18"/>
<rect x="1006.05" y="472.60" width="1.00" height="166.20" fill="#8a8e9a" opacity="0.18"/>
<rect x="1030.70" y="472.60" width="1.00" height="166.20" fill="#8a8e9a" opacity="0.18"/>
<rect x="1055.35" y="472.60" width="1.00" height="166.20" fill="#8a8e9a" opacity="0.18"/>
<rect x="1080.00" y="472.60" width="1.00" height="166.20" fill="#8a8e9a" opacity="0.18"/>
<rect x="1104.65" y="472.60" width="1.00" height="166.20" fill="#8a8e9a" opacity="0.18"/>
<rect x="1129.30" y="472.60" width="1.00" height="166.20" fill="#8a8e9a" opacity="0.18"/>
<rect x="1153.95" y="472.60" width="1.00" height="166.20" fill="#8a8e9a" opacity="0.18"/>
<rect x="1178.60" y="472.60" width="1.00" height="166.20" fill="#8a8e9a" opacity="0.18"/>
<path d="M488.90,569.55 C497.53,569.55 504.92,583.40 513.55,583.40 C522.18,583.40 529.57,555.70 538.20,555.70 C546.83,555.70 554.22,569.55 562.85,569.55 C571.48,569.55 578.87,569.55 587.50,569.55 C596.13,569.55 603.52,555.70 612.15,555.70 C620.78,555.70 628.17,583.40 636.80,583.40 C645.43,583.40 652.82,569.55 661.45,569.55 C670.08,569.55 677.47,583.40 686.10,583.40 C694.73,583.40 702.12,583.40 710.75,583.40 C719.38,583.40 726.77,569.55 735.40,569.55 C744.03,569.55 751.42,583.40 760.05,583.40 C768.68,583.40 776.07,569.55 784.70,569.55 C793.33,569.55 800.72,569.55 809.35,569.55 C817.98,569.55 825.37,638.80 834.00,638.80 C842.63,638.80 850.02,569.55 858.65,569.55 C867.28,569.55 874.67,486.45 883.30,486.45 C891.93,486.45 899.32,638.80 907.95,638.80 C916.58,638.80 923.97,569.55 932.60,569.55 C941.23,569.55 948.62,569.55 957.25,569.55 C965.88,569.55 973.27,583.40 981.90,583.40 C990.53,583.40 997.92,583.40 1006.55,583.40 C1015.18,583.40 1022.57,638.80 1031.20,638.80 C1039.83,638.80 1047.22,500.30 1055.85,500.30 C1064.48,500.30 1071.87,638.80 1080.50,638.80 C1089.13,638.80 1096.52,569.55 1105.15,569.55 C1113.78,569.55 1121.17,638.80 1129.80,638.80 C1138.43,638.80 1145.82,638.80 1154.45,638.80 C1163.08,638.80 1170.47,569.55 1179.10,569.55" stroke="#7a4ccb" stroke-width="1.8" fill="none"/>
<circle cx="488.90" cy="569.55" r="3.0" fill="#7a4ccb"/>
<circle cx="513.55" cy="583.40" r="3.0" fill="#7a4ccb"/>
<circle cx="538.20" cy="555.70" r="3.0" fill="#7a4ccb"/>
<circle cx="562.85" cy="569.55" r="3.0" fill="#7a4ccb"/>
<circle cx="587.50" cy="569.55" r="3.0" fill="#7a4ccb"/>
<circle cx="612.15" cy="555.70" r="3.0" fill="#7a4ccb"/>
<circle cx="636.80" cy="583.40" r="3.0" fill="#7a4ccb"/>
<circle cx="661.45" cy="569.55" r="3.0" fill="#7a4ccb"/>
<circle cx="686.10" cy="583.40" r="3.0" fill="#7a4ccb"/>
<circle cx="710.75" cy="583.40" r="3.0" fill="#7a4ccb"/>
<circle cx="735.40" cy="569.55" r="3.0" fill="#7a4ccb"/>
<circle cx="760.05" cy="583.40" r="3.0" fill="#7a4ccb"/>
<circle cx="784.70" cy="569.55" r="3.0" fill="#7a4ccb"/>
<circle cx="809.35" cy="569.55" r="3.0" fill="#7a4ccb"/>
<circle cx="834.00" cy="638.80" r="3.0" fill="#7a4ccb"/>
<circle cx="858.65" cy="569.55" r="3.0" fill="#7a4ccb"/>
<circle cx="883.30" cy="486.45" r="3.0" fill="#7a4ccb"/>
<circle cx="907.95" cy="638.80" r="3.0" fill="#7a4ccb"/>
<circle cx="932.60" cy="569.55" r="3.0" fill="#7a4ccb"/>
<circle cx="957.25" cy="569.55" r="3.0" fill="#7a4ccb"/>
<circle cx="981.90" cy="583.40" r="3.0" fill="#7a4ccb"/>
<circle cx="1006.55" cy="583.40" r="3.0" fill="#7a4ccb"/>
<circle cx="1031.20" cy="638.80" r="3.0" fill="#7a4ccb"/>
<circle cx="1055.85" cy="500.30" r="3.0" fill="#7a4ccb"/>
<circle cx="1080.50" cy="638.80" r="3.0" fill="#7a4ccb"/>
<circle cx="1105.15" cy="569.55" r="3.0" fill="#7a4ccb"/>
<circle cx="1129.80" cy="638.80" r="3.0" fill="#7a4ccb"/>
<circle cx="1154.45" cy="638.80" r="3.0" fill="#7a4ccb"/>
<circle cx="1179.10" cy="569.55" r="3.0" fill="#7a4ccb"/>
<path d="M488.90,631.88 C497.53,631.88 504.92,633.26 513.55,633.26 C522.18,633.26 529.57,631.88 538.20,631.88 C546.83,631.88 554.22,627.72 562.85,627.72 C571.48,627.72 578.87,631.88 587.50,631.88 C596.13,631.88 603.52,636.03 612.15,636.03 C620.78,636.03 628.17,633.26 636.80,633.26 C645.43,633.26 652.82,631.88 661.45,631.88 C670.08,631.88 677.47,631.88 686.10,631.88 C694.73,631.88 702.12,630.49 710.75,630.49 C719.38,630.49 726.77,637.41 735.40,637.41 C744.03,637.41 751.42,631.88 760.05,631.88 C768.68,631.88 776.07,631.88 784.70,631.88 C793.33,631.88 800.72,631.88 809.35,631.88 C817.98,631.88 825.37,629.10 834.00,629.10 C842.63,629.10 850.02,631.88 858.65,631.88 C867.28,631.88 874.67,629.10 883.30,629.10 C891.93,629.10 899.32,638.80 907.95,638.80 C916.58,638.80 923.97,622.18 932.60,622.18 C941.23,622.18 948.62,631.88 957.25,631.88 C965.88,631.88 973.27,633.26 981.90,633.26 C990.53,633.26 997.92,638.80 1006.55,638.80 C1015.18,638.80 1022.57,634.64 1031.20,634.64 C1039.83,634.64 1047.22,630.49 1055.85,630.49 C1064.48,630.49 1071.87,626.33 1080.50,626.33 C1089.13,626.33 1096.52,631.88 1105.15,631.88 C1113.78,631.88 1121.17,634.64 1129.80,634.64 C1138.43,634.64 1145.82,631.88 1154.45,631.88 C1163.08,631.88 1170.47,634.64 1179.10,634.64" stroke="#1fa9f2" stroke-width="1.8" fill="none"/>
<circle cx="488.90" cy="631.88" r="3.0" fill="#1fa9f2"/>
<circle cx="513.55" cy="633.26" r="3.0" fill="#1fa9f2"/>
<circle cx="538.20" cy="631.88" r="3.0" fill="#1fa9f2"/>
<circle cx="562.85" cy="627.72" r="3.0" fill="#1fa9f2"/>
<circle cx="587.50" cy="631.88" r="3.0" fill="#1fa9f2"/>
<circle cx="612.15" cy="636.03" r="3.0" fill="#1fa9f2"/>
<circle cx="636.80" cy="633.26" r="3.0" fill="#1fa9f2"/>
<circle cx="661.45" cy="631.88" r="3.0" fill="#1fa9f2"/>
<circle cx="686.10" cy="631.88" r="3.0" fill="#1fa9f2"/>
<circle cx="710.75" cy="630.49" r="3.0" fill="#1fa9f2"/>
<circle cx="735.40" cy="637.41" r="3.0" fill="#1fa9f2"/>
<circle cx="760.05" cy="631.88" r="3.0" fill="#1fa9f2"/>
<circle cx="784.70" cy="631.88" r="3.0" fill="#1fa9f2"/>
<circle cx="809.35" cy="631.88" r="3.0" fill="#1fa9f2"/>
<circle cx="834.00" cy="629.10" r="3.0" fill="#1fa9f2"/>
<circle cx="858.65" cy="631.88" r="3.0" fill="#1fa9f2"/>
<circle cx="883.30" cy="629.10" r="3.0" fill="#1fa9f2"/>
<circle cx="907.95" cy="638.80" r="3.0" fill="#1fa9f2"/>
<circle cx="932.60" cy="622.18" r="3.0" fill="#1fa9f2"/>
<circle cx="957.25" cy="631.88" r="3.0" fill="#1fa9f2"/>
<circle cx="981.90" cy="633.26" r="3.0" fill="#1fa9f2"/>
<circle cx="1006.55" cy="638.80" r="3.0" fill="#1fa9f2"/>
<circle cx="1031.20" cy="634.64" r="3.0" fill="#1fa9f2"/>
<circle cx="1055.85" cy="630.49" r="3.0" fill="#1fa9f2"/>
<circle cx="1080.50" cy="626.33" r="3.0" fill="#1fa9f2"/>
<circle cx="1105.15" cy="631.88" r="3.0" fill="#1fa9f2"/>
<circle cx="1129.80" cy="634.64" r="3.0" fill="#1fa9f2"/>
<circle cx="1154.45" cy="631.88" r="3.0" fill="#1fa9f2"/>
<circle cx="1179.10" cy="634.64" r="3.0" fill="#1fa9f2"/>
<path d="M488.90,638.80 C497.53,638.80 504.92,638.80 513.55,638.80 C522.18,638.80 529.57,569.55 538.20,569.55 C546.83,569.55 554.22,638.80 562.85,638.80 C571.48,638.80 578.87,638.80 587.50,638.80 C596.13,638.80 603.52,638.80 612.15,638.80 C620.78,638.80 628.17,624.95 636.80,624.95 C645.43,624.95 652.82,638.80 661.45,638.80 C670.08,638.80 677.47,611.10 686.10,611.10 C694.73,611.10 702.12,638.80 710.75,638.80 C719.38,638.80 726.77,638.80 735.40,638.80 C744.03,638.80 751.42,611.10 760.05,611.10 C768.68,611.10 776.07,638.80 784.70,638.80 C793.33,638.80 800.72,638.80 809.35,638.80 C817.98,638.80 825.37,597.25 834.00,597.25 C842.63,597.25 850.02,638.80 858.65,638.80 C867.28,638.80 874.67,638.80 883.30,638.80 C891.93,638.80 899.32,597.25 907.95,597.25 C916.58,597.25 923.97,638.80 932.60,638.80 C941.23,638.80 948.62,638.80 957.25,638.80 C965.88,638.80 973.27,638.80 981.90,638.80 C990.53,638.80 997.92,597.25 1006.55,597.25 C1015.18,597.25 1022.57,638.80 1031.20,638.80 C1039.83,638.80 1047.22,638.80 1055.85,638.80 C1064.48,638.80 1071.87,638.80 1080.50,638.80 C1089.13,638.80 1096.52,638.80 1105.15,638.80 C1113.78,638.80 1121.17,555.70 1129.80,555.70 C1138.43,555.70 1145.82,638.80 1154.45,638.80 C1163.08,638.80 1170.47,638.80 1179.10,638.80" stroke="#4caf50" stroke-width="1.8" fill="none"/>
<circle cx="488.90" cy="638.80" r="3.0" fill="#4caf50"/>
<circle cx="513.55" cy="638.80" r="3.0" fill="#4caf50"/>
<circle cx="538.20" cy="569.55" r="3.0" fill="#4caf50"/>
<circle cx="562.85" cy="638.80" r="3.0" fill="#4caf50"/>
<circle cx="587.50" cy="638.80" r="3.0" fill="#4caf50"/>
<circle cx="612.15" cy="638.80" r="3.0" fill="#4caf50"/>
<circle cx="636.80" cy="624.95" r="3.0" fill="#4caf50"/>
<circle cx="661.45" cy="638.80" r="3.0" fill="#4caf50"/>
<circle cx="686.10" cy="611.10" r="3.0" fill="#4caf50"/>
<circle cx="710.75" cy="638.80" r="3.0" fill="#4caf50"/>
<circle cx="735.40" cy="638.80" r="3.0" fill="#4caf50"/>
<circle cx="760.05" cy="611.10" r="3.0" fill="#4caf50"/>
<circle cx="784.70" cy="638.80" r="3.0" fill="#4caf50"/>
<circle cx="809.35" cy="638.80" r="3.0" fill="#4caf50"/>
<circle cx="834.00" cy="597.25" r="3.0" fill="#4caf50"/>
<circle cx="858.65" cy="638.80" r="3.0" fill="#4caf50"/>
<circle cx="883.30" cy="638.80" r="3.0" fill="#4caf50"/>
<circle cx="907.95" cy="597.25" r="3.0" fill="#4caf50"/>
<circle cx="932.60" cy="638.80" r="3.0" fill="#4caf50"/>
<circle cx="957.25" cy="638.80" r="3.0" fill="#4caf50"/>
<circle cx="981.90" cy="638.80" r="3.0" fill="#4caf50"/>
<circle cx="1006.55" cy="597.25" r="3.0" fill="#4caf50"/>
<circle cx="1031.20" cy="638.80" r="3.0" fill="#4caf50"/>
<circle cx="1055.85" cy="638.80" r="3.0" fill="#4caf50"/>
<circle cx="1080.50" cy="638.80" r="3.0" fill="#4caf50"/>
<circle cx="1105.15" cy="638.80" r="3.0" fill="#4caf50"/>
<circle cx="1129.80" cy="555.70" r="3.0" fill="#4caf50"/>
<circle cx="1154.45" cy="638.80" r="3.0" fill="#4caf50"/>
<circle cx="1179.10" cy="638.80" r="3.0" fill="#4caf50"/>
<g transform="rotate(-45 491.80 644.6)">
<text transform="translate(491.80,644.60) scale(0.5895,1)" font-size="7.8" fill="#bfc2c8" text-anchor="end" textLength="43.86" lengthAdjust="spacing" >1 Aug 2020</text>
</g>
<g transform="rotate(-45 516.45 644.6)">
<text transform="translate(516.45,644.60) scale(0.5895,1)" font-size="7.8" fill="#bfc2c8" text-anchor="end" textLength="43.86" lengthAdjust="spacing" >2 Aug 2020</text>
</g>
<g transform="rotate(-45 541.10 644.6)">
<text transform="translate(541.10,644.60) scale(0.5895,1)" font-size="7.8" fill="#bfc2c8" text-anchor="end" textLength="43.86" lengthAdjust="spacing" >3 Aug 2020</text>
</g>
<g transform="rotate(-45 565.75 644.6)">
<text transform="translate(565.75,644.60) scale(0.5895,1)" font-size="7.8" fill="#bfc2c8" text-anchor="end" textLength="43.86" lengthAdjust="spacing" >4 Aug 2020</text>
</g>
<g transform="rotate(-45 590.40 644.6)">
<text transform="translate(590.40,644.60) scale(0.5895,1)" font-size="7.8" fill="#bfc2c8" text-anchor="end" textLength="43.86" lengthAdjust="spacing" >5 Aug 2020</text>
</g>
<g transform="rotate(-45 615.05 644.6)">
<text transform="translate(615.05,644.60) scale(0.5895,1)" font-size="7.8" fill="#bfc2c8" text-anchor="end" textLength="43.86" lengthAdjust="spacing" >6 Aug 2020</text>
</g>
<g transform="rotate(-45 639.70 644.6)">
<text transform="translate(639.70,644.60) scale(0.5895,1)" font-size="7.8" fill="#bfc2c8" text-anchor="end" textLength="43.86" lengthAdjust="spacing" >7 Aug 2020</text>
</g>
<g transform="rotate(-45 664.35 644.6)">
<text transform="translate(664.35,644.60) scale(0.5895,1)" font-size="7.8" fill="#bfc2c8" text-anchor="end" textLength="43.86" lengthAdjust="spacing" >8 Aug 2020</text>
</g>
<g transform="rotate(-45 689.00 644.6)">
<text transform="translate(689.00,644.60) scale(0.5895,1)" font-size="7.8" fill="#bfc2c8" text-anchor="end" textLength="43.86" lengthAdjust="spacing" >9 Aug 2020</text>
</g>
<g transform="rotate(-45 713.65 644.6)">
<text transform="translate(713.65,644.60) scale(0.5895,1)" font-size="7.8" fill="#bfc2c8" text-anchor="end" textLength="48.68" lengthAdjust="spacing" >10 Aug 2020</text>
</g>
<g transform="rotate(-45 738.30 644.6)">
<text transform="translate(738.30,644.60) scale(0.5895,1)" font-size="7.8" fill="#bfc2c8" text-anchor="end" textLength="48.04" lengthAdjust="spacing" >11 Aug 2020</text>
</g>
<g transform="rotate(-45 762.95 644.6)">
<text transform="translate(762.95,644.60) scale(0.5895,1)" font-size="7.8" fill="#bfc2c8" text-anchor="end" textLength="48.68" lengthAdjust="spacing" >12 Aug 2020</text>
</g>
<g transform="rotate(-45 787.60 644.6)">
<text transform="translate(787.60,644.60) scale(0.5895,1)" font-size="7.8" fill="#bfc2c8" text-anchor="end" textLength="48.68" lengthAdjust="spacing" >13 Aug 2020</text>
</g>
<g transform="rotate(-45 812.25 644.6)">
<text transform="translate(812.25,644.60) scale(0.5895,1)" font-size="7.8" fill="#bfc2c8" text-anchor="end" textLength="48.68" lengthAdjust="spacing" >14 Aug 2020</text>
</g>
<g transform="rotate(-45 836.90 644.6)">
<text transform="translate(836.90,644.60) scale(0.5895,1)" font-size="7.8" fill="#bfc2c8" text-anchor="end" textLength="48.68" lengthAdjust="spacing" >15 Aug 2020</text>
</g>
<g transform="rotate(-45 861.55 644.6)">
<text transform="translate(861.55,644.60) scale(0.5895,1)" font-size="7.8" fill="#bfc2c8" text-anchor="end" textLength="48.68" lengthAdjust="spacing" >16 Aug 2020</text>
</g>
<g transform="rotate(-45 886.20 644.6)">
<text transform="translate(886.20,644.60) scale(0.5895,1)" font-size="7.8" fill="#bfc2c8" text-anchor="end" textLength="48.68" lengthAdjust="spacing" >17 Aug 2020</text>
</g>
<g transform="rotate(-45 910.85 644.6)">
<text transform="translate(910.85,644.60) scale(0.5895,1)" font-size="7.8" fill="#bfc2c8" text-anchor="end" textLength="48.68" lengthAdjust="spacing" >18 Aug 2020</text>
</g>
<g transform="rotate(-45 935.50 644.6)">
<text transform="translate(935.50,644.60) scale(0.5895,1)" font-size="7.8" fill="#bfc2c8" text-anchor="end" textLength="48.68" lengthAdjust="spacing" >19 Aug 2020</text>
</g>
<g transform="rotate(-45 960.15 644.6)">
<text transform="translate(960.15,644.60) scale(0.5895,1)" font-size="7.8" fill="#bfc2c8" text-anchor="end" textLength="48.68" lengthAdjust="spacing" >20 Aug 2020</text>
</g>
<g transform="rotate(-45 984.80 644.6)">
<text transform="translate(984.80,644.60) scale(0.5895,1)" font-size="7.8" fill="#bfc2c8" text-anchor="end" textLength="48.68" lengthAdjust="spacing" >21 Aug 2020</text>
</g>
<g transform="rotate(-45 1009.45 644.6)">
<text transform="translate(1009.45,644.60) scale(0.5895,1)" font-size="7.8" fill="#bfc2c8" text-anchor="end" textLength="48.68" lengthAdjust="spacing" >22 Aug 2020</text>
</g>
<g transform="rotate(-45 1034.10 644.6)">
<text transform="translate(1034.10,644.60) scale(0.5895,1)" font-size="7.8" fill="#bfc2c8" text-anchor="end" textLength="48.68" lengthAdjust="spacing" >23 Aug 2020</text>
</g>
<g transform="rotate(-45 1058.75 644.6)">
<text transform="translate(1058.75,644.60) scale(0.5895,1)" font-size="7.8" fill="#bfc2c8" text-anchor="end" textLength="48.68" lengthAdjust="spacing" >24 Aug 2020</text>
</g>
<g transform="rotate(-45 1083.40 644.6)">
<text transform="translate(1083.40,644.60) scale(0.5895,1)" font-size="7.8" fill="#bfc2c8" text-anchor="end" textLength="48.68" lengthAdjust="spacing" >25 Aug 2020</text>
</g>
<g transform="rotate(-45 1108.05 644.6)">
<text transform="translate(1108.05,644.60) scale(0.5895,1)" font-size="7.8" fill="#bfc2c8" text-anchor="end" textLength="48.68" lengthAdjust="spacing" >26 Aug 2020</text>
</g>
<g transform="rotate(-45 1132.70 644.6)">
<text transform="translate(1132.70,644.60) scale(0.5895,1)" font-size="7.8" fill="#bfc2c8" text-anchor="end" textLength="48.68" lengthAdjust="spacing" >27 Aug 2020</text>
</g>
<g transform="rotate(-45 1157.35 644.6)">
<text transform="translate(1157.35,644.60) scale(0.5895,1)" font-size="7.8" fill="#bfc2c8" text-anchor="end" textLength="48.68" lengthAdjust="spacing" >28 Aug 2020</text>
</g>
<g transform="rotate(-45 1182.00 644.6)">
<text transform="translate(1182.00,644.60) scale(0.5895,1)" font-size="7.8" fill="#bfc2c8" text-anchor="end" textLength="48.68" lengthAdjust="spacing" >29 Aug 2020</text>
</g>
<circle cx="1184.6" cy="680.6" r="12.6" fill="#0e5f66"/>
<path d="M1179.5,685.7 A3.2,3.2 0 0 1 1178.6,679.5 A4.6,4.6 0 0 1 1187.4,677.6 A3.6,3.6 0 0 1 1189.6,685.7Z" fill="#ffffff"/>
<path d="M1183.7,678.6 L1185.5,678.6 L1185.5,681.5 L1187,681.5 L1184.6,684.2 L1182.2,681.5 L1183.7,681.5Z" fill="#0e5f66"/>
<rect x="895.00" y="163.00" width="1.00" height="40.00" fill="#1a1a1a" />
</svg>
</body></html>
